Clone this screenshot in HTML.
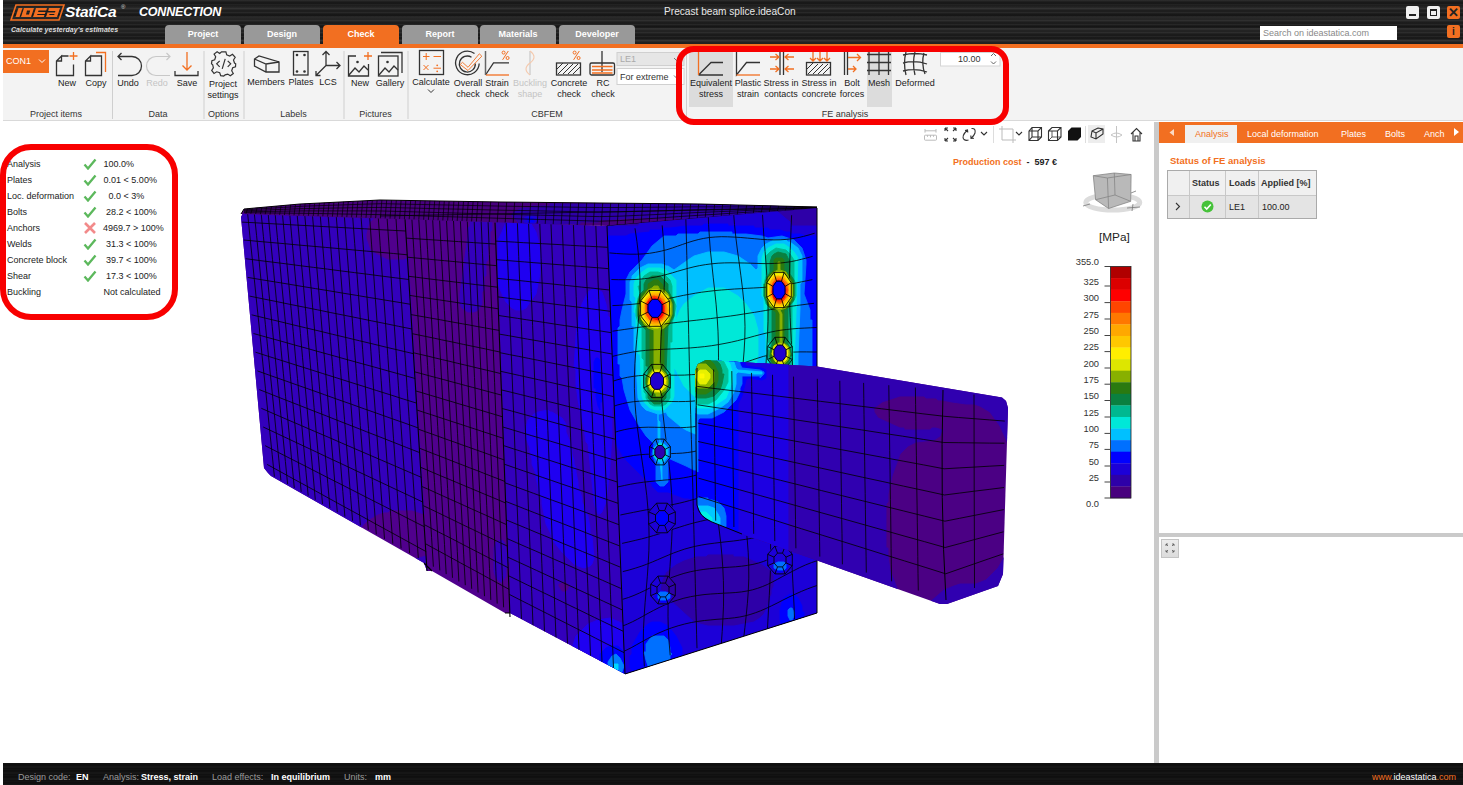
<!DOCTYPE html>
<html><head><meta charset="utf-8">
<style>
*{margin:0;padding:0;box-sizing:border-box}
html,body{width:1463px;height:785px;overflow:hidden;background:#fff;font-family:"Liberation Sans",sans-serif;position:relative}
.a{position:absolute;white-space:nowrap}
#title{left:3px;top:0;width:1460px;height:44px;background:#232323;
 background-image:repeating-linear-gradient(180deg,rgba(255,255,255,0.06) 0px,rgba(255,255,255,0) 1.5px,rgba(0,0,0,0.25) 3px,rgba(0,0,0,0) 4px),
 repeating-linear-gradient(180deg,rgba(0,0,0,0) 0px,rgba(0,0,0,0.3) 5px,rgba(255,255,255,0.05) 7px,rgba(0,0,0,0) 11px);}
#orange{left:3px;top:44px;width:1460px;height:4px;background:#f26f21}
#ribbon{left:3px;top:48px;width:1460px;height:73px;background:#f3f3f3;border-bottom:1px solid #d9d9d9}
.tab{top:25px;height:19px;width:76px;background:#999;border-radius:4px 4px 0 0;color:#fff;font-weight:bold;font-size:9px;text-align:center;line-height:19px}
.tab.on{background:#f26f21}
.rl{font-size:9px;color:#222;text-align:center;line-height:11px;margin-top:1px}
.gl{font-size:9px;color:#333;text-align:center;top:109px;line-height:11px}
.sep{top:51px;width:1px;height:68px;background:#d0d0d0}
.dis{color:#c4c4c4}
#status{left:3px;top:763px;width:1460px;height:22px;background:#0d0d0d;
 background-image:repeating-linear-gradient(180deg,rgba(255,255,255,0.035) 0px,rgba(0,0,0,0) 2px,rgba(255,255,255,0.05) 4px,rgba(0,0,0,0) 6px);}
.sg{color:#9a9a9a;font-size:9px;top:772px}
.sw{color:#fff;font-size:9px;font-weight:bold;top:772px}
.res{font-size:9px;color:#222;line-height:10px}
.leg{font-size:9.3px;color:#333;text-align:right;width:40px;line-height:10px}
</style></head><body>
<div class="a" id="title"></div>
<!-- logo -->
<svg class="a" style="left:10px;top:4px" width="56" height="17" viewBox="0 0 56 17">
 <path d="M6 1 L54 1 L49 16 L1 16 Z" fill="none" stroke="#f26f21" stroke-width="1.6"/>
 <path d="M8.5 4 L12.5 4 L9.5 13 L5.5 13 Z" fill="#f26f21"/>
 <path d="M14 4 L24 4 L21 13 L11 13 Z M17 6.5 L16 10.5 L19 10.5 L20.2 6.5 Z" fill="#f26f21" fill-rule="evenodd"/>
 <path d="M26 4 L37 4 L36.2 6.5 L28.5 6.5 L28 8 L35.5 8 L34.8 10 L27.5 10 L27 11 L34.5 11 L33.8 13 L23 13 Z" fill="#f26f21"/>
 <path d="M39 4 L50 4 L47 13 L36 13 L37.5 8.5 L45 8.5 L45.4 7 L38.2 7 Z M39.5 10 L39.2 11 L44.2 11 L44.5 10 Z" fill="#f26f21" fill-rule="evenodd"/>
</svg>
<div class="a" style="left:65px;top:3px;font-size:15.5px;font-weight:bold;font-style:italic;color:#fff;letter-spacing:-0.3px">StatiCa</div>
<div class="a" style="left:121px;top:4px;font-size:6px;color:#ddd">®</div>
<div class="a" style="left:139px;top:5px;font-size:12.5px;font-weight:bold;font-style:italic;color:#fff;letter-spacing:-0.2px">CONNECTION</div>
<div class="a" style="left:11px;top:26px;font-size:7px;font-weight:bold;font-style:italic;color:#ddd;letter-spacing:0.05px">Calculate yesterday's estimates</div>
<div class="a" style="left:664px;top:6px;font-size:10.15px;color:#e8e8e8">Precast beam splice.ideaCon</div>
<!-- tabs -->
<div class="a tab" style="left:165px">Project</div>
<div class="a tab" style="left:244px">Design</div>
<div class="a tab on" style="left:323px">Check</div>
<div class="a tab" style="left:402px">Report</div>
<div class="a tab" style="left:480px">Materials</div>
<div class="a tab" style="left:559px">Developer</div>
<!-- window buttons -->
<div class="a" style="left:1406px;top:6px;width:13px;height:13px;background:#f0f0f0;border-radius:2px"><div class="a" style="left:3px;top:8px;width:7px;height:2px;background:#222"></div></div>
<div class="a" style="left:1427px;top:6px;width:13px;height:13px;background:#f0f0f0;border-radius:2px"><div class="a" style="left:3px;top:3px;width:7px;height:7px;border:1.5px solid #222;border-top-width:2.5px"></div></div>
<div class="a" style="left:1447px;top:6px;width:13px;height:13px;background:#f26f21;border-radius:2px;color:#222;font-size:13px;font-weight:bold;line-height:13px;text-align:center">✕</div>
<div class="a" style="left:1260px;top:26px;width:137px;height:14px;background:#fff;font-size:9px;color:#888;line-height:14px;padding-left:3px">Search on ideastatica.com</div>
<div class="a" style="left:1447px;top:25px;width:13px;height:13px;background:#f26f21;border-radius:2px;color:#222;font-size:10px;font-weight:bold;line-height:13px;text-align:center">i</div>
<div class="a" id="orange"></div>
<div class="a" id="ribbon"></div>
<!-- ribbon content -->
<div class="a" style="left:3px;top:50px;width:46px;height:23px;background:#f26f21;color:#fff;font-size:9px;line-height:22px;padding-left:3px">CON1</div>
<svg class="a" style="left:38px;top:58px" width="8" height="6"><path d="M1 1.5 L4 4.5 L7 1.5" stroke="#fff" fill="none" stroke-width="1"/></svg>
<div class="a" style="left:689px;top:52px;width:44px;height:54.5px;background:#dcdcdc"></div>
<div class="a" style="left:867px;top:52px;width:25px;height:55px;background:#dcdcdc"></div>
<svg class="a" style="left:0;top:0" width="1463" height="125" viewBox="0 0 1463 125">
<g fill="none" stroke="#333" stroke-width="1.3" stroke-linejoin="miter">
 <!-- New doc -->
 <path d="M61 56 L68.5 56 M73.5 64.5 L73.5 75.5 L56.5 75.5 L56.5 61 L61.5 56 L61.5 61 L56.5 61"/>
 <!-- Copy doc -->
 <path d="M90.5 56 L101.5 56 L101.5 75.5 L85.5 75.5 L85.5 61 L90.5 56 L90.5 61 L85.5 61"/>
 <!-- undo -->
 <path d="M118 56.5 L132 56.5 A9.5 9.5 0 0 1 132 75.5 L118 75.5 M121.5 53 L118 56.5 L121.5 60"/>
 <!-- save tray -->
 <path d="M175 71 L175 75.5 L198 75.5 L198 71"/>
 <!-- plates -->
 <rect x="293.5" y="51.5" width="14.5" height="23.5"/>
 <!-- members -->
 <path d="M254.5 59 L259 56 L279 62 L279 72 L266 72 L254.5 66 Z M254.5 59 L266 64 L279 62 M266 64 L266 72"/>
 <!-- LCS -->
 <path d="M326 65.5 L326 51.5 M322.5 55 L326 51.5 L329.5 55 M326 65.5 L340 65.5 M336.5 62 L340 65.5 L336.5 69 M326 65.5 L316 75.5 M316 71 L316 75.5 L320.5 75.5"/>
 <!-- pictures new -->
 <path d="M356 56 L348.5 56 L348.5 76 L368.5 76 L368.5 64 M349 75 L355 68 L359 72 L364 66 L368 70"/>
 <!-- gallery -->
 <rect x="378.5" y="56" width="19.5" height="20"/>
 <path d="M381 52.5 L402 52.5 L402 73 M379 75 L385 68 L389 72 L394 66 L398 70"/>
 <!-- calculate -->
 <rect x="419.5" y="50.5" width="24" height="24"/>
 <!-- overall -->
 <path d="M474.5 53.5 A11.8 11.8 0 1 0 479.2 63.5"/><path d="M471.5 57.2 A8 8 0 1 0 475.3 63.5"/>
 <!-- strain -->
 <path d="M485.5 75 L493.5 62.8 L509 62.8"/><path d="M485.5 51 L485.5 75" stroke="#666" stroke-width="1.5"/>
 <!-- concrete -->
 <rect x="556.5" y="63" width="24" height="12"/>
 <!-- RC -->
 <rect x="590" y="63" width="24.5" height="12" rx="1.5"/>
 <path d="M602 51 L602 72"/>
 <!-- equivalent -->
 <path d="M698.5 75 L711 62.5 L723 62.5 M698.5 75 L723 75"/>
 <!-- plastic -->
 <path d="M736.5 51.5 L736.5 75 L746.5 62.5 L760 62.5"/>
 <!-- contacts -->
 <path d="M780 52 L780 75 M783.5 52 L783.5 75"/>
 <!-- stress in concrete -->
 <rect x="806.5" y="62.5" width="24" height="12.5"/>
 <!-- bolt -->
 <path d="M844.5 52 L844.5 75 M847.5 52 L847.5 75"/>
 <!-- mesh -->
 <path d="M869 52 L869 75 M879 52 L879 75 M888.5 52 L888.5 75 M867 54.5 L891 54.5 M867 62.5 L891 62.5 M867 70.5 L891 70.5"/>
 <!-- deformed -->
 <path d="M906 52 Q903 63 906 75 M915 52 Q912 63 915 75 M924 53 Q921 63 925 74 M903 55 Q915 52 927 55 M903 63 Q915 60 927 64 M903 71 Q915 68 927 72"/>
</g>
<g fill="none" stroke="#f26f21" stroke-width="1.3">
 <path d="M73.5 52 L73.5 60 M69.5 56 L77.5 56"/>
 <path d="M96 52.5 L105.5 52.5 L105.5 72"/>
 <path d="M187 52 L187 70 M182.5 65.5 L187 70 L191.5 65.5"/>
 <path d="M368 52 L368 60 M364 56 L372 56"/>
 <path d="M462.5 62.3 L468 67.3 L479.3 53.8 L481.8 56.2 L468 70.5 L460.2 64.5 Z" stroke-width="0.9"/>
 <path d="M486 75 L509 75"/>
 <path d="M698.5 52 L698.5 75"/>
 <path d="M736.5 75 L760 75"/>
 <path d="M770 57 L779 57 M775.5 54 L779 57 L775.5 60 M770 69 L779 69 M775.5 66 L779 69 L775.5 72 M794 57 L785 57 M788.5 54 L785 57 L788.5 60 M794 69 L785 69 M788.5 66 L785 69 L788.5 72"/>
 <path d="M813 52 L813 61 M810 58 L813 61 L816 58 M820 52 L820 61 M817 58 L820 61 L823 58 M827 52 L827 61 M824 58 L827 61 L830 58"/>
 <path d="M848 57.5 L860.5 57.5 M857 54 L860.5 57.5 L857 61 M848 69 L856 69 M853 66 L856 69 L853 72"/>
 <path d="M592 66.5 L612.5 66.5 M592 70 L612.5 70 M592 73 L612.5 73"/>
</g>
<g fill="none" stroke="#f26f21" stroke-width="1">
 <path d="M423 56.5 L429.5 56.5 M426.2 53 L426.2 60 M433.5 56.5 L441 56.5 M423.5 65 L428.5 70 M428.5 65 L423.5 70 M433.5 68.2 L441 68.2"/>
 <circle cx="503.6" cy="52.6" r="1.5"/><circle cx="507.6" cy="58" r="1.5"/><path d="M508.3 51 L502.6 59.8"/>
 <circle cx="574.6" cy="52.6" r="1.5"/><circle cx="578.6" cy="58" r="1.5"/><path d="M579.3 51 L573.6 59.8"/>
</g>
<g fill="#f26f21"><circle cx="437.2" cy="65.3" r="0.9"/><circle cx="437.2" cy="71.3" r="0.9"/></g>
<g stroke="#c8c8c8" fill="none" stroke-width="1.2">
 <path d="M170 56.5 L156 56.5 A9.5 9.5 0 0 0 156 75.5 L170 75.5 M166.5 53 L170 56.5 L166.5 60"/>
 <path d="M530 51 L530 75"/>
</g>
<path d="M530 51 Q538 57 530 63 Q522 69 530 75" stroke="#f5c9ad" fill="none" stroke-width="1.1"/>
<!-- hatching -->
<g stroke="#333" stroke-width="1">
 <path d="M558 74 L568 64 M563 74 L573 64 M568 74 L578 64 M573 74 L580 67 M557 69 L563 63"/>
 <path d="M808 74 L818 64 M813 74 L823 64 M818 74 L828 64 M823 74 L830 67 M807 69 L813 63"/>
</g>
<g fill="#333"><circle cx="297" cy="55" r="1.3"/><circle cx="304.5" cy="55" r="1.3"/><circle cx="297" cy="71.5" r="1.3"/><circle cx="304.5" cy="71.5" r="1.3"/>
<circle cx="357.5" cy="62" r="1.3"/><circle cx="387.5" cy="62" r="1.3"/></g>
<!-- gear -->
<g transform="translate(223.7 63.8)" fill="none" stroke="#333" stroke-width="1.2">
 <path d="M-2.2 -12 L2.2 -12 L3 -9 L6 -7.8 L8.8 -9.5 L11.5 -6.5 L9.8 -3.8 L10.8 -0.8 L12 0 L11.8 3 L9 4 L8 7 L9.6 9.7 L6.6 12 L4 10.3 L1.5 11 L0 12.2 L-3 11.8 L-4 9 L-7 8 L-9.7 9.6 L-12 6.6 L-10.3 4 L-11 1 L-12.2 0 L-11.8 -3 L-9 -4 L-8 -7 L-9.6 -9.7 L-6.6 -12 L-4 -10.3 Z"/>
 <path d="M-4 -3 L-7 0 L-4 3 M4 -3 L7 0 L4 3 M1.5 -5 L-1.5 5"/>
</g>
<!-- LE1 / For extreme -->
<rect x="617" y="52.5" width="67" height="13" fill="#e6e6e6" stroke="#d0d0d0"/>
<rect x="617" y="68.5" width="67" height="16" fill="#fff" stroke="#d0d0d0"/>
<path d="M674 58 L676.5 60.5 L679 58 M674 75.5 L676.5 78 L679 75.5" stroke="#666" fill="none" stroke-width="0.9"/>
<rect x="940.5" y="52.5" width="59.5" height="13.5" fill="#fff" stroke="#d5d5d5"/>
<path d="M991 56 L993.5 53.5 L996 56 M991 61.5 L993.5 64 L996 61.5" stroke="#555" fill="none" stroke-width="0.9"/>
<!-- separators -->
<g fill="#cfcfcf"><rect x="112" y="51" width="1" height="68"/><rect x="203.5" y="51" width="1" height="68"/><rect x="243.5" y="51" width="1" height="68"/><rect x="343.5" y="51" width="1" height="68"/><rect x="407.5" y="51" width="1" height="68"/><rect x="686" y="51" width="1" height="68"/></g>
</svg>
<div class="a" style="left:620px;top:53px;font-size:9px;color:#aaa;line-height:12px">LE1</div>
<div class="a" style="left:620px;top:71px;font-size:9px;color:#333;line-height:12px">For extreme</div>
<div class="a" style="left:958px;top:53px;font-size:9px;color:#333;line-height:12px">10.00</div>
<!-- labels -->
<div class="a rl" style="left:52px;top:77px;width:30px">New</div>
<div class="a rl" style="left:81px;top:77px;width:30px">Copy</div>
<div class="a rl" style="left:113px;top:77px;width:30px">Undo</div>
<div class="a rl dis" style="left:142px;top:77px;width:30px">Redo</div>
<div class="a rl" style="left:172px;top:77px;width:30px">Save</div>
<div class="a rl" style="left:203px;top:78px;width:40px">Project<br>settings</div>
<div class="a rl" style="left:246px;top:76px;width:40px">Members</div>
<div class="a rl" style="left:286px;top:76px;width:30px">Plates</div>
<div class="a rl" style="left:313px;top:76px;width:30px">LCS</div>
<div class="a rl" style="left:345px;top:77px;width:30px">New</div>
<div class="a rl" style="left:372px;top:77px;width:36px">Gallery</div>
<div class="a rl" style="left:410px;top:76px;width:42px">Calculate</div>
<div class="a rl" style="left:450px;top:77px;width:36px">Overall<br>check</div>
<div class="a rl" style="left:482px;top:77px;width:30px">Strain<br>check</div>
<div class="a rl dis" style="left:510px;top:77px;width:40px">Buckling<br>shape</div>
<div class="a rl" style="left:548px;top:77px;width:42px">Concrete<br>check</div>
<div class="a rl" style="left:588px;top:77px;width:30px">RC<br>check</div>
<div class="a rl" style="left:689px;top:77px;width:44px">Equivalent<br>stress</div>
<div class="a rl" style="left:733px;top:77px;width:30px">Plastic<br>strain</div>
<div class="a rl" style="left:761px;top:77px;width:40px">Stress in<br>contacts</div>
<div class="a rl" style="left:798px;top:77px;width:42px">Stress in<br>concrete</div>
<div class="a rl" style="left:837px;top:77px;width:30px">Bolt<br>forces</div>
<div class="a rl" style="left:865px;top:77px;width:28px">Mesh</div>
<div class="a rl" style="left:893px;top:77px;width:44px">Deformed</div>
<svg class="a" style="left:427px;top:88px" width="8" height="6"><path d="M1 1.5 L4 4.5 L7 1.5" stroke="#333" fill="none" stroke-width="1"/></svg>
<div class="a gl" style="left:6px;width:100px">Project items</div>
<div class="a gl" style="left:113px;width:90px">Data</div>
<div class="a gl" style="left:204px;width:39px">Options</div>
<div class="a gl" style="left:244px;width:99px">Labels</div>
<div class="a gl" style="left:344px;width:63px">Pictures</div>
<div class="a gl" style="left:408px;width:278px">CBFEM</div>
<div class="a gl" style="left:687px;width:316px">FE analysis</div>
<svg class="a" style="left:0;top:0" width="1463" height="785" viewBox="0 0 1463 785">
<clipPath id="cp1"><path d="M244.00 211.00 L607.00 226.00 L625.00 674.00 L510.00 613.00 L505.00 613.00 L432.00 571.00 L427.00 571.00 L424.00 563.00 L271.00 476.00 L268.00 473.00 L264.00 468.00 L241.00 217.00Z"/></clipPath>
<path d="M244.00 211.00 L607.00 226.00 L625.00 674.00 L510.00 613.00 L505.00 613.00 L432.00 571.00 L427.00 571.00 L424.00 563.00 L271.00 476.00 L268.00 473.00 L264.00 468.00 L241.00 217.00Z" fill="#50008d"/>
<g clip-path="url(#cp1)">
<path d="M562 582 566 582 570 586 568 590 566 592 562 592 558 586 558 584ZM484 214 478 214 474 216 470 222 470 226 468 228 468 234 468 236 466 250 466 250 464 264 464 266 462 280 462 280 460 294 460 296 460 304 462 308 468 312 474 312 478 310 482 304 482 300 482 298 482 292 484 290 484 276 486 276 486 262 488 260 488 246 490 246 490 232 492 230 492 222 490 218ZM496 206 508 552 508 554 506 552 506 548 504 542 502 540 500 540 496 542 494 548 494 552 494 554 494 568 494 568 494 572 496 578 500 582 502 582 506 576 506 568 508 568 508 562 508 562 510 562 510 588 510 588 510 614 512 614 512 640 512 640 514 680 630 680 630 206ZM236 206 236 680 434 680 434 676 434 662 432 660 432 646 432 644 432 630 430 630 430 614 430 614 430 598 428 598 428 582 428 582 426 556 412 560 390 560 388 560 384 560 374 556 368 552 362 546 358 540 358 532 362 526 368 520 378 514 384 512 388 512 390 510 412 510 424 514 408 258 404 260 388 260 376 254 370 250 368 244 366 238 366 234 368 226 370 222 376 216 388 210 404 210 404 212 404 206Z" fill="#3300bc" stroke="#3300bc" stroke-width="0.9" fill-rule="evenodd"/>
<path d="M584 628 576 636 572 648 572 664 576 676 580 680 630 680 630 630 624 624 610 618 598 620 588 624ZM538 412 534 414 528 420 526 428 526 434 526 434 526 438 530 448 530 452 532 460 532 464 536 474 536 478 538 486 538 490 542 500 542 504 542 504 546 524 550 532 554 542 562 552 574 564 578 566 584 568 590 566 592 564 594 558 592 536 590 534 590 530 590 528 588 516 586 512 584 506 582 502 582 498 578 486 578 482 576 472 576 468 574 464 574 460 572 454 572 450 570 446 570 442 566 432 566 424 562 418 552 412 550 412 548 410ZM594 288 588 292 582 304 580 310 578 322 578 322 576 336 576 338 574 368 576 370 576 384 576 384 578 400 578 400 580 410 584 428 586 442 588 444 594 500 594 502 596 510 598 514 600 514 602 512 606 502 608 486 608 486 610 466 610 466 612 434 612 434 612 408 614 406 614 358 612 358 612 332 610 330 610 318 608 316 606 304 602 292 598 290ZM516 216 512 218 506 222 502 232 498 240 498 244 498 246 498 274 498 276 498 284 502 294 506 302 512 308 516 310 522 310 526 308 530 302 536 294 538 284 540 274 540 274 540 252 540 250 538 240 536 232 530 222 526 218 522 216Z" fill="#1f00f1" stroke="#1f00f1" stroke-width="0.9" fill-rule="evenodd"/>
<path d="M606 648 600 654 600 664 606 678 608 680 624 680 628 670 628 662 624 652 618 646 616 646 610 646ZM596 358 594 362 594 388 596 388 596 396 596 396 598 406 600 410 600 408 600 402 602 402 602 372 600 372 600 360 598 358Z" fill="#0000ff" stroke="#0000ff" stroke-width="0.9" fill-rule="evenodd"/>
<path d="M616 654 612 656 608 662 608 670 612 678 618 678 620 676 622 672 624 666 620 658Z" fill="#007dff" stroke="#007dff" stroke-width="0.9" fill-rule="evenodd"/>
<path d="M614 664 614 670 616 672 618 670 618 666 618 664Z" fill="#00d7ff" stroke="#00d7ff" stroke-width="0.9" fill-rule="evenodd"/>
</g>
<path d="M247.6 213.2 L249.8 235.2 L252.1 257.1 L254.3 279.1 L256.5 301.0 L258.8 323.0 L261.0 344.9 L263.2 366.9 L265.5 388.8 L267.7 410.8 L269.9 432.7 L272.2 454.7 L274.4 476.6M254.3 213.5 L256.6 235.7 L258.8 258.0 L261.0 280.2 L263.2 302.4 L265.4 324.7 L267.6 346.9 L269.8 369.1 L272.1 391.4 L274.3 413.6 L276.5 435.8 L278.7 458.1 L280.9 480.3M261.2 213.7 L263.4 236.3 L265.6 258.8 L267.8 281.3 L270.0 303.9 L272.2 326.4 L274.4 348.9 L276.6 371.4 L278.8 394.0 L281.0 416.5 L283.2 439.0 L285.4 461.5 L287.6 484.1M268.2 214.0 L270.3 236.8 L272.5 259.6 L274.7 282.5 L276.9 305.3 L279.1 328.1 L281.2 350.9 L283.4 373.8 L285.6 396.6 L287.8 419.4 L290.0 442.2 L292.1 465.1 L294.3 487.9M275.2 214.3 L277.4 237.4 L279.6 260.5 L281.7 283.6 L283.9 306.8 L286.1 329.9 L288.2 353.0 L290.4 376.2 L292.5 399.3 L294.7 422.4 L296.9 445.5 L299.0 468.7 L301.2 491.8M282.5 214.5 L284.6 238.0 L286.7 261.4 L288.9 284.8 L291.0 308.3 L293.2 331.7 L295.3 355.1 L297.5 378.6 L299.6 402.0 L301.8 425.4 L303.9 448.9 L306.0 472.3 L308.2 495.7M289.8 214.8 L291.9 238.5 L294.0 262.3 L296.2 286.0 L298.3 309.8 L300.4 333.5 L302.5 357.3 L304.7 381.0 L306.8 404.8 L308.9 428.5 L311.0 452.3 L313.2 476.0 L315.3 499.8M297.2 215.1 L299.3 239.1 L301.4 263.2 L303.6 287.3 L305.7 311.3 L307.8 335.4 L309.9 359.5 L312.0 383.5 L314.1 407.6 L316.2 431.7 L318.3 455.7 L320.4 479.8 L322.5 503.9M304.8 215.3 L306.9 239.7 L309.0 264.1 L311.1 288.5 L313.1 312.9 L315.2 337.3 L317.3 361.7 L319.4 386.1 L321.5 410.5 L323.6 434.8 L325.7 459.2 L327.8 483.6 L329.9 508.0M312.5 215.6 L314.6 240.3 L316.6 265.1 L318.7 289.8 L320.8 314.5 L322.8 339.2 L324.9 363.9 L327.0 388.6 L329.0 413.4 L331.1 438.1 L333.2 462.8 L335.2 487.5 L337.3 512.2M320.3 215.9 L322.3 241.0 L324.4 266.0 L326.4 291.1 L328.5 316.1 L330.5 341.2 L332.6 366.2 L334.6 391.3 L336.7 416.3 L338.7 441.4 L340.8 466.4 L342.8 491.5 L344.9 516.5M328.2 216.2 L330.3 241.6 L332.3 267.0 L334.3 292.4 L336.3 317.8 L338.4 343.1 L340.4 368.5 L342.4 393.9 L344.5 419.3 L346.5 444.7 L348.5 470.1 L350.5 495.5 L352.6 520.9M336.3 216.5 L338.3 242.2 L340.3 268.0 L342.3 293.7 L344.3 319.4 L346.3 345.2 L348.3 370.9 L350.3 396.6 L352.3 422.4 L354.3 448.1 L356.4 473.8 L358.4 499.6 L360.4 525.3M344.4 216.8 L346.4 242.9 L348.4 268.9 L350.4 295.0 L352.4 321.1 L354.4 347.2 L356.4 373.3 L358.4 399.4 L360.3 425.4 L362.3 451.5 L364.3 477.6 L366.3 503.7 L368.3 529.8M352.7 217.1 L354.7 243.5 L356.7 270.0 L358.6 296.4 L360.6 322.8 L362.6 349.3 L364.5 375.7 L366.5 402.1 L368.5 428.6 L370.4 455.0 L372.4 481.4 L374.4 507.9 L376.3 534.3M361.1 217.4 L363.1 244.2 L365.0 271.0 L367.0 297.8 L368.9 324.6 L370.9 351.4 L372.8 378.2 L374.8 405.0 L376.7 431.8 L378.6 458.5 L380.6 485.3 L382.5 512.1 L384.5 538.9M369.7 217.7 L371.6 244.9 L373.5 272.0 L375.4 299.2 L377.4 326.3 L379.3 353.5 L381.2 380.7 L383.1 407.8 L385.1 435.0 L387.0 462.1 L388.9 489.3 L390.8 516.5 L392.8 543.6M378.3 218.0 L380.2 245.6 L382.1 273.1 L384.0 300.6 L385.9 328.1 L387.8 355.7 L389.7 383.2 L391.6 410.7 L393.5 438.2 L395.4 465.8 L397.3 493.3 L399.2 520.8 L401.1 548.4M387.1 218.3 L389.0 246.2 L390.9 274.2 L392.7 302.1 L394.6 330.0 L396.5 357.9 L398.4 385.8 L400.2 413.7 L402.1 441.6 L404.0 469.5 L405.9 497.4 L407.8 525.3 L409.6 553.2M396.0 218.7 L397.8 247.0 L399.7 275.2 L401.6 303.5 L403.4 331.8 L405.3 360.1 L407.1 388.4 L409.0 416.6 L410.8 444.9 L412.7 473.2 L414.6 501.5 L416.4 529.8 L418.3 558.1M241.9 222.1 L255.6 222.8 L269.2 223.6 L282.9 224.3 L296.6 225.1 L310.2 225.8 L323.9 226.6 L337.5 227.3 L351.2 228.1 L364.8 228.8 L378.5 229.6 L392.1 230.3 L405.8 231.0M243.8 240.0 L257.4 241.3 L271.1 242.5 L284.7 243.7 L298.3 245.0 L311.9 246.2 L325.5 247.4 L339.2 248.6 L352.8 249.9 L366.4 251.1 L380.0 252.3 L393.7 253.5 L407.3 254.8M245.7 258.7 L259.3 260.5 L272.9 262.2 L286.5 263.9 L300.1 265.7 L313.7 267.4 L327.3 269.1 L340.9 270.9 L354.5 272.6 L368.1 274.3 L381.7 276.1 L395.3 277.8 L408.9 279.5M247.7 277.4 L261.3 279.7 L274.8 281.9 L288.4 284.1 L301.9 286.4 L315.5 288.6 L329.1 290.8 L342.6 293.1 L356.2 295.3 L369.8 297.6 L383.3 299.8 L396.9 302.0 L410.5 304.3M249.6 296.1 L263.2 298.9 L276.7 301.6 L290.2 304.4 L303.8 307.1 L317.3 309.8 L330.8 312.6 L344.4 315.3 L357.9 318.0 L371.4 320.8 L385.0 323.5 L398.5 326.3 L412.0 329.0M251.6 314.8 L265.1 318.1 L278.6 321.3 L292.1 324.6 L305.6 327.8 L319.1 331.0 L332.6 334.3 L346.1 337.5 L359.6 340.8 L373.1 344.0 L386.6 347.3 L400.1 350.5 L413.6 353.7M253.5 333.5 L267.0 337.3 L280.5 341.0 L293.9 344.8 L307.4 348.5 L320.9 352.3 L334.4 356.0 L347.8 359.8 L361.3 363.5 L374.8 367.2 L388.3 371.0 L401.7 374.7 L415.2 378.5M255.5 352.2 L268.9 356.5 L282.3 360.7 L295.8 365.0 L309.2 369.2 L322.7 373.5 L336.1 377.7 L349.6 382.0 L363.0 386.2 L376.5 390.5 L389.9 394.7 L403.3 399.0 L416.8 403.2M257.4 370.9 L270.8 375.7 L284.2 380.4 L297.6 385.2 L311.1 389.9 L324.5 394.7 L337.9 399.5 L351.3 404.2 L364.7 409.0 L378.1 413.7 L391.5 418.5 L405.0 423.2 L418.4 428.0M259.3 389.6 L272.7 394.9 L286.1 400.2 L299.5 405.4 L312.9 410.7 L326.3 415.9 L339.6 421.2 L353.0 426.4 L366.4 431.7 L379.8 436.9 L393.2 442.2 L406.6 447.5 L419.9 452.7M261.3 408.3 L274.6 414.1 L288.0 419.9 L301.3 425.6 L314.7 431.4 L328.1 437.1 L341.4 442.9 L354.8 448.7 L368.1 454.4 L381.5 460.2 L394.8 465.9 L408.2 471.7 L421.5 477.4M263.2 427.0 L276.6 433.3 L289.9 439.6 L303.2 445.8 L316.5 452.1 L329.8 458.4 L343.2 464.6 L356.5 470.9 L369.8 477.1 L383.1 483.4 L396.5 489.7 L409.8 495.9 L423.1 502.2M265.2 445.7 L278.5 452.5 L291.8 459.3 L305.1 466.0 L318.3 472.8 L331.6 479.6 L344.9 486.3 L358.2 493.1 L371.5 499.9 L384.8 506.6 L398.1 513.4 L411.4 520.2 L424.7 526.9M267.1 464.4 L280.4 471.7 L293.6 479.0 L306.9 486.2 L320.2 493.5 L333.4 500.8 L346.7 508.1 L360.0 515.3 L373.2 522.6 L386.5 529.9 L399.7 537.1 L413.0 544.4 L426.3 551.7M411.9 219.3 L413.7 248.2 L415.5 277.2 L417.3 306.1 L419.1 335.1 L420.9 364.0 L422.7 393.0 L424.4 421.9 L426.2 450.9 L428.0 479.8 L429.8 508.8 L431.6 537.7 L433.4 566.7M418.8 219.5 L420.6 248.8 L422.3 278.0 L424.1 307.2 L425.8 336.5 L427.6 365.7 L429.3 395.0 L431.1 424.2 L432.8 453.4 L434.5 482.7 L436.3 511.9 L438.0 541.1 L439.8 570.4M425.8 219.8 L427.5 249.3 L429.2 278.9 L430.9 308.4 L432.6 337.9 L434.3 367.4 L436.0 396.9 L437.7 426.5 L439.4 456.0 L441.1 485.5 L442.8 515.0 L444.5 544.6 L446.2 574.1M432.7 220.1 L434.3 249.9 L436.0 279.7 L437.7 309.5 L439.3 339.3 L441.0 369.1 L442.6 398.9 L444.3 428.7 L445.9 458.5 L447.6 488.3 L449.2 518.2 L450.9 548.0 L452.5 577.8M439.6 220.3 L441.2 250.4 L442.8 280.5 L444.4 310.6 L446.1 340.7 L447.7 370.8 L449.3 400.9 L450.9 431.0 L452.5 461.1 L454.1 491.2 L455.7 521.3 L457.3 551.4 L458.9 581.5M446.5 220.6 L448.1 251.0 L449.7 281.4 L451.2 311.8 L452.8 342.1 L454.4 372.5 L455.9 402.9 L457.5 433.3 L459.1 463.6 L460.6 494.0 L462.2 524.4 L463.7 554.8 L465.3 585.2M453.5 220.9 L455.0 251.5 L456.5 282.2 L458.0 312.9 L459.5 343.5 L461.1 374.2 L462.6 404.9 L464.1 435.5 L465.6 466.2 L467.1 496.9 L468.7 527.5 L470.2 558.2 L471.7 588.8M460.4 221.2 L461.9 252.1 L463.3 283.1 L464.8 314.0 L466.3 344.9 L467.8 375.9 L469.2 406.8 L470.7 437.8 L472.2 468.7 L473.7 499.7 L475.1 530.6 L476.6 561.6 L478.1 592.5M467.3 221.4 L468.7 252.7 L470.2 283.9 L471.6 315.1 L473.0 346.4 L474.5 377.6 L475.9 408.8 L477.3 440.1 L478.7 471.3 L480.2 502.5 L481.6 533.8 L483.0 565.0 L484.5 596.2M474.2 221.7 L475.6 253.2 L477.0 284.7 L478.4 316.2 L479.8 347.8 L481.2 379.3 L482.5 410.8 L483.9 442.3 L485.3 473.8 L486.7 505.4 L488.1 536.9 L489.5 568.4 L490.8 599.9M481.2 222.0 L482.5 253.8 L483.8 285.6 L485.2 317.4 L486.5 349.2 L487.9 381.0 L489.2 412.8 L490.5 444.6 L491.9 476.4 L493.2 508.2 L494.6 540.0 L495.9 571.8 L497.2 603.6M488.1 222.2 L489.4 254.3 L490.7 286.4 L492.0 318.5 L493.3 350.6 L494.6 382.7 L495.8 414.8 L497.1 446.9 L498.4 478.9 L499.7 511.0 L501.0 543.1 L502.3 575.2 L503.6 607.3M406.2 238.1 L413.7 238.6 L421.2 239.1 L428.6 239.6 L436.1 240.1 L443.6 240.6 L451.0 241.1 L458.5 241.6 L466.0 242.1 L473.4 242.6 L480.9 243.1 L488.4 243.6 L495.8 244.1M407.4 257.2 L414.9 257.9 L422.3 258.6 L429.8 259.3 L437.2 260.0 L444.6 260.7 L452.1 261.4 L459.5 262.1 L466.9 262.9 L474.4 263.6 L481.8 264.3 L489.2 265.0 L496.7 265.7M408.7 276.3 L416.1 277.2 L423.5 278.2 L430.9 279.1 L438.3 280.0 L445.7 280.9 L453.1 281.8 L460.5 282.7 L467.9 283.6 L475.3 284.5 L482.7 285.4 L490.1 286.3 L497.5 287.2M409.9 295.4 L417.3 296.6 L424.6 297.7 L432.0 298.8 L439.4 299.9 L446.7 301.0 L454.1 302.1 L461.5 303.3 L468.9 304.4 L476.2 305.5 L483.6 306.6 L491.0 307.7 L498.3 308.8M411.1 314.6 L418.4 315.9 L425.8 317.2 L433.1 318.5 L440.5 319.8 L447.8 321.2 L455.1 322.5 L462.5 323.8 L469.8 325.1 L477.2 326.5 L484.5 327.8 L491.8 329.1 L499.2 330.4M412.3 333.7 L419.6 335.2 L426.9 336.7 L434.2 338.2 L441.6 339.8 L448.9 341.3 L456.2 342.8 L463.5 344.4 L470.8 345.9 L478.1 347.4 L485.4 348.9 L492.7 350.5 L500.0 352.0M413.6 352.8 L420.8 354.5 L428.1 356.2 L435.4 358.0 L442.6 359.7 L449.9 361.4 L457.2 363.2 L464.5 364.9 L471.7 366.6 L479.0 368.4 L486.3 370.1 L493.6 371.8 L500.8 373.6M414.8 371.9 L422.0 373.8 L429.3 375.8 L436.5 377.7 L443.7 379.6 L451.0 381.6 L458.2 383.5 L465.5 385.5 L472.7 387.4 L479.9 389.3 L487.2 391.3 L494.4 393.2 L501.7 395.2M416.0 391.0 L423.2 393.1 L430.4 395.3 L437.6 397.4 L444.8 399.6 L452.0 401.7 L459.2 403.9 L466.5 406.0 L473.7 408.2 L480.9 410.3 L488.1 412.5 L495.3 414.6 L502.5 416.8M417.2 410.1 L424.4 412.5 L431.6 414.8 L438.8 417.2 L445.9 419.5 L453.1 421.9 L460.3 424.2 L467.5 426.6 L474.6 428.9 L481.8 431.3 L489.0 433.6 L496.2 436.0 L503.3 438.3M418.4 429.2 L425.6 431.8 L432.7 434.3 L439.9 436.9 L447.0 439.5 L454.2 442.0 L461.3 444.6 L468.4 447.1 L475.6 449.7 L482.7 452.2 L489.9 454.8 L497.0 457.4 L504.2 459.9M419.7 448.3 L426.8 451.1 L433.9 453.9 L441.0 456.6 L448.1 459.4 L455.2 462.2 L462.3 464.9 L469.4 467.7 L476.6 470.4 L483.7 473.2 L490.8 476.0 L497.9 478.7 L505.0 481.5M420.9 467.4 L428.0 470.4 L435.0 473.4 L442.1 476.4 L449.2 479.3 L456.3 482.3 L463.4 485.3 L470.4 488.2 L477.5 491.2 L484.6 494.2 L491.7 497.1 L498.8 500.1 L505.8 503.1M422.1 486.6 L429.2 489.7 L436.2 492.9 L443.2 496.1 L450.3 499.3 L457.3 502.4 L464.4 505.6 L471.4 508.8 L478.5 512.0 L485.5 515.1 L492.6 518.3 L499.6 521.5 L506.7 524.7M423.3 505.7 L430.3 509.0 L437.4 512.4 L444.4 515.8 L451.4 519.2 L458.4 522.6 L465.4 526.0 L472.4 529.3 L479.4 532.7 L486.5 536.1 L493.5 539.5 L500.5 542.9 L507.5 546.2M424.6 524.8 L431.5 528.4 L438.5 532.0 L445.5 535.5 L452.5 539.1 L459.5 542.7 L466.4 546.3 L473.4 549.9 L480.4 553.5 L487.4 557.1 L494.4 560.7 L501.4 564.2 L508.3 567.8M425.8 543.9 L432.7 547.7 L439.7 551.5 L446.6 555.3 L453.6 559.1 L460.5 562.9 L467.5 566.7 L474.4 570.4 L481.4 574.2 L488.3 578.0 L495.3 581.8 L502.2 585.6 L509.2 589.4M506.2 222.8 L507.5 255.9 L508.8 288.9 L510.0 321.9 L511.3 354.9 L512.6 388.0 L513.9 421.0 L515.1 454.0 L516.4 487.0 L517.7 520.0 L519.0 553.1 L520.2 586.1 L521.5 619.1M517.4 223.2 L518.7 256.7 L520.0 290.2 L521.3 323.7 L522.6 357.2 L523.9 390.7 L525.2 424.2 L526.5 457.7 L527.8 491.2 L529.1 524.7 L530.4 558.2 L531.7 591.7 L533.0 625.2M528.6 223.6 L529.9 257.5 L531.2 291.5 L532.6 325.5 L533.9 359.5 L535.2 393.4 L536.5 427.4 L537.9 461.4 L539.2 495.4 L540.5 529.4 L541.8 563.3 L543.2 597.3 L544.5 631.3M539.8 223.9 L541.1 258.4 L542.5 292.8 L543.9 327.3 L545.2 361.7 L546.5 396.2 L547.9 430.6 L549.2 465.1 L550.6 499.6 L552.0 534.0 L553.3 568.5 L554.6 602.9 L556.0 637.4M551.0 224.2 L552.4 259.2 L553.8 294.1 L555.1 329.1 L556.5 364.0 L557.9 398.9 L559.2 433.9 L560.6 468.8 L562.0 503.7 L563.4 538.7 L564.8 573.6 L566.1 608.6 L567.5 643.5M562.2 224.6 L563.6 260.0 L565.0 295.4 L566.4 330.8 L567.8 366.3 L569.2 401.7 L570.6 437.1 L572.0 472.5 L573.4 507.9 L574.8 543.3 L576.2 578.8 L577.6 614.2 L579.0 649.6M573.4 224.9 L574.8 260.8 L576.2 296.7 L577.7 332.6 L579.1 368.5 L580.5 404.4 L582.0 440.3 L583.4 476.2 L584.8 512.1 L586.2 548.0 L587.7 583.9 L589.1 619.8 L590.5 655.7M584.6 225.3 L586.0 261.7 L587.5 298.1 L589.0 334.4 L590.4 370.8 L591.9 407.2 L593.3 443.5 L594.8 479.9 L596.2 516.3 L597.7 552.7 L599.1 589.1 L600.6 625.4 L602.0 661.8M595.8 225.7 L597.3 262.5 L598.8 299.4 L600.2 336.2 L601.7 373.1 L603.2 409.9 L604.7 446.8 L606.1 483.6 L607.6 520.5 L609.1 557.3 L610.5 594.2 L612.0 631.0 L613.5 667.9M495.7 241.1 L505.1 241.6 L514.4 242.1 L523.7 242.7 L533.1 243.2 L542.4 243.7 L551.8 244.2 L561.1 244.7 L570.5 245.3 L579.8 245.8 L589.2 246.3 L598.5 246.8 L607.9 247.3M496.4 259.7 L505.8 260.4 L515.1 261.2 L524.5 261.9 L533.9 262.7 L543.2 263.4 L552.6 264.2 L561.9 264.9 L571.3 265.7 L580.6 266.4 L590.0 267.2 L599.4 267.9 L608.7 268.7M497.1 278.3 L506.5 279.3 L515.9 280.2 L525.2 281.2 L534.6 282.2 L544.0 283.2 L553.4 284.1 L562.7 285.1 L572.1 286.1 L581.5 287.1 L590.8 288.0 L600.2 289.0 L609.6 290.0M497.9 296.9 L507.2 298.1 L516.6 299.3 L526.0 300.5 L535.4 301.7 L544.8 302.9 L554.1 304.1 L563.5 305.3 L572.9 306.5 L582.3 307.7 L591.7 308.9 L601.0 310.1 L610.4 311.3M498.6 315.5 L508.0 316.9 L517.4 318.3 L526.8 319.8 L536.1 321.2 L545.5 322.6 L554.9 324.1 L564.3 325.5 L573.7 326.9 L583.1 328.4 L592.5 329.8 L601.9 331.2 L611.3 332.7M499.3 334.1 L508.7 335.7 L518.1 337.4 L527.5 339.1 L536.9 340.7 L546.3 342.4 L555.7 344.0 L565.1 345.7 L574.5 347.4 L583.9 349.0 L593.3 350.7 L602.7 352.3 L612.1 354.0M500.0 352.7 L509.4 354.6 L518.8 356.4 L528.2 358.3 L537.7 360.2 L547.1 362.1 L556.5 364.0 L565.9 365.9 L575.3 367.8 L584.8 369.7 L594.2 371.6 L603.6 373.4 L613.0 375.3M500.7 371.3 L510.1 373.4 L519.6 375.5 L529.0 377.6 L538.4 379.7 L547.9 381.8 L557.3 384.0 L566.7 386.1 L576.1 388.2 L585.6 390.3 L595.0 392.4 L604.4 394.5 L613.9 396.7M501.4 389.9 L510.9 392.2 L520.3 394.5 L529.8 396.9 L539.2 399.2 L548.6 401.6 L558.1 403.9 L567.5 406.3 L577.0 408.6 L586.4 411.0 L595.8 413.3 L605.3 415.7 L614.7 418.0M502.1 408.5 L511.6 411.0 L521.0 413.6 L530.5 416.2 L540.0 418.7 L549.4 421.3 L558.9 423.9 L568.3 426.5 L577.8 429.0 L587.2 431.6 L596.7 434.2 L606.1 436.8 L615.6 439.3M502.9 427.0 L512.3 429.8 L521.8 432.7 L531.2 435.5 L540.7 438.3 L550.2 441.1 L559.6 443.9 L569.1 446.7 L578.6 449.5 L588.0 452.3 L597.5 455.1 L607.0 457.9 L616.4 460.7M503.6 445.6 L513.0 448.7 L522.5 451.7 L532.0 454.7 L541.5 457.8 L551.0 460.8 L560.4 463.8 L569.9 466.9 L579.4 469.9 L588.9 472.9 L598.3 475.9 L607.8 479.0 L617.3 482.0M504.3 464.2 L513.8 467.5 L523.3 470.8 L532.8 474.0 L542.2 477.3 L551.7 480.5 L561.2 483.8 L570.7 487.0 L580.2 490.3 L589.7 493.6 L599.2 496.8 L608.7 500.1 L618.1 503.3M505.0 482.8 L514.5 486.3 L524.0 489.8 L533.5 493.3 L543.0 496.8 L552.5 500.3 L562.0 503.7 L571.5 507.2 L581.0 510.7 L590.5 514.2 L600.0 517.7 L609.5 521.2 L619.0 524.7M505.7 501.4 L515.2 505.1 L524.7 508.9 L534.2 512.6 L543.8 516.3 L553.3 520.0 L562.8 523.7 L572.3 527.4 L581.8 531.1 L591.3 534.9 L600.8 538.6 L610.3 542.3 L619.9 546.0M506.4 520.0 L516.0 524.0 L525.5 527.9 L535.0 531.9 L544.5 535.8 L554.0 539.7 L563.6 543.7 L573.1 547.6 L582.6 551.6 L592.1 555.5 L601.7 559.4 L611.2 563.4 L620.7 567.3M507.1 538.6 L516.7 542.8 L526.2 547.0 L535.8 551.1 L545.3 555.3 L554.8 559.5 L564.4 563.6 L573.9 567.8 L583.4 572.0 L593.0 576.2 L602.5 580.3 L612.0 584.5 L621.6 588.7M507.9 557.2 L517.4 561.6 L527.0 566.0 L536.5 570.4 L546.0 574.8 L555.6 579.2 L565.1 583.6 L574.7 588.0 L584.2 592.4 L593.8 596.8 L603.3 601.2 L612.9 605.6 L622.4 610.0M508.6 575.8 L518.1 580.4 L527.7 585.1 L537.2 589.7 L546.8 594.3 L556.4 598.9 L565.9 603.6 L575.5 608.2 L585.0 612.8 L594.6 617.5 L604.2 622.1 L613.7 626.7 L623.3 631.3M509.3 594.4 L518.9 599.3 L528.4 604.1 L538.0 609.0 L547.6 613.8 L557.1 618.7 L566.7 623.5 L576.3 628.4 L585.9 633.2 L595.4 638.1 L605.0 643.0 L614.6 647.8 L624.1 652.7" stroke="#000" stroke-opacity="0.8" stroke-width="1" fill="none"/>
<path d="M405 219 L427 571 M495 222.5 L510 617 M424 563 L432 571 M505 613 L510 613" stroke="#000" stroke-width="1.1" fill="none"/>
<clipPath id="cp2"><path d="M241.00 214.00 L244.00 209.00 L300.00 204.00 L380.00 200.00 L500.00 202.00 L600.00 203.00 L700.00 204.00 L817.00 207.00 L817.00 208.50 L607.00 226.00Z"/></clipPath>
<path d="M241.00 214.00 L244.00 209.00 L300.00 204.00 L380.00 200.00 L500.00 202.00 L600.00 203.00 L700.00 204.00 L817.00 207.00 L817.00 208.50 L607.00 226.00Z" fill="#48007e"/>
<g clip-path="url(#cp2)">
<path d="M512 216 520 224 524 226 534 226 544 224 580 224 580 222 590 222 592 222 598 222 600 220 606 220 606 220 630 218 632 218 644 218 644 218 746 218 746 218 762 218 764 216 774 216 776 216 790 214 792 214 798 212 800 212 800 210 790 206 784 206 784 206 764 204 762 204 746 204 746 202 654 202 654 204 632 204 630 204 550 204 550 206 538 206 538 206 532 206 530 208 522 208 514 212 512 214Z" fill="#2e00a8" stroke="#2e00a8" stroke-width="0.9" fill-rule="evenodd"/>
<path d="M524 218 524 222 528 224 534 224 538 220 538 218 534 216 528 216Z" fill="#1c00d8" stroke="#1c00d8" stroke-width="0.9" fill-rule="evenodd"/>
<path d="M528 220 528 222 534 222 534 220 532 218 528 218Z" fill="#0000ff" stroke="#0000ff" stroke-width="0.9" fill-rule="evenodd"/>
</g>
<path d="M246.0 213.7 L247.5 208.7M250.8 213.8 L252.3 208.3M255.6 214.0 L257.1 207.8M260.4 214.2 L261.9 207.4M265.2 214.3 L266.7 207.0M270.0 214.5 L271.5 206.5M274.8 214.7 L276.3 206.1M279.6 214.8 L281.1 205.7M284.4 215.0 L285.9 205.3M289.2 215.1 L290.7 204.8M294.0 215.3 L295.5 204.4M298.8 215.5 L300.3 204.0M303.6 215.6 L305.1 203.7M308.4 215.8 L309.9 203.5M313.2 216.0 L314.7 203.3M318.0 216.1 L319.5 203.0M322.8 216.3 L324.3 202.8M327.6 216.5 L329.1 202.5M332.4 216.6 L333.9 202.3M337.2 216.8 L338.7 202.1M342.0 216.9 L343.5 201.8M346.8 217.1 L348.3 201.6M351.6 217.3 L353.1 201.3M356.4 217.4 L357.9 201.1M361.2 217.6 L362.7 200.9M366.0 217.8 L367.5 200.6M370.8 217.9 L372.3 200.4M375.6 218.1 L377.1 200.1M380.4 218.3 L381.9 200.0M385.2 218.4 L386.7 200.1M390.0 218.6 L391.5 200.2M394.8 218.8 L396.3 200.3M399.6 218.9 L401.1 200.4M404.4 219.1 L405.9 200.4M409.2 219.2 L410.7 200.5M414.0 219.4 L415.5 200.6M418.8 219.6 L420.3 200.7M423.6 219.7 L425.1 200.8M428.4 219.9 L429.9 200.8M433.2 220.1 L434.7 200.9M438.0 220.2 L439.5 201.0M442.8 220.4 L444.3 201.1M447.6 220.6 L449.1 201.2M452.4 220.7 L453.9 201.2M457.2 220.9 L458.7 201.3M462.0 221.0 L463.5 201.4M466.8 221.2 L468.3 201.5M471.6 221.4 L473.1 201.6M476.4 221.5 L477.9 201.6M481.2 221.7 L482.7 201.7M489.2 222.0 L490.7 201.8M497.2 222.3 L498.7 202.0M505.2 222.5 L506.7 202.1M513.2 222.8 L514.7 202.1M521.2 223.1 L522.7 202.2M529.2 223.3 L530.7 202.3M537.2 223.6 L538.7 202.4M545.2 223.9 L546.7 202.5M553.2 224.2 L554.7 202.5M561.2 224.4 L562.7 202.6M569.2 224.7 L570.7 202.7M577.2 225.0 L578.7 202.8M585.2 225.3 L586.7 202.9M593.2 225.5 L594.7 202.9M601.2 225.8 L602.7 203.0M609.2 225.8 L610.7 203.1M617.2 225.1 L618.7 203.2M625.2 224.4 L626.7 203.3M633.2 223.8 L634.7 203.3M641.2 223.1 L642.7 203.4M649.2 222.4 L650.7 203.5M657.2 221.7 L658.7 203.6M665.2 221.0 L666.7 203.7M673.2 220.3 L674.7 203.7M681.2 219.6 L682.7 203.8M689.2 219.0 L690.7 203.9M697.2 218.3 L698.7 204.0M705.2 217.6 L706.7 204.2M713.2 216.9 L714.7 204.4M721.2 216.2 L722.7 204.6M729.2 215.5 L730.7 204.8M737.2 214.8 L738.7 205.0M745.2 214.2 L746.7 205.2M753.2 213.5 L754.7 205.4M761.2 212.8 L762.7 205.6M769.2 212.1 L770.7 205.8M777.2 211.4 L778.7 206.0M785.2 210.7 L786.7 206.2M793.2 210.0 L794.7 206.4M801.2 209.4 L802.7 206.6M809.2 208.7 L810.7 206.8M244.0 212.7 L263.8 212.9 L283.5 213.1 L303.3 213.3 L323.0 213.6 L342.8 214.0 L362.6 214.3 L382.3 214.7 L402.1 215.3 L421.8 215.9 L441.6 216.5 L461.3 217.1 L481.1 217.7 L500.9 218.3 L520.6 218.9 L540.4 219.5 L560.1 220.0 L579.9 220.6 L599.7 221.2 L619.4 220.6 L639.2 219.3 L658.9 218.0 L678.7 216.6 L698.4 215.3 L718.2 214.1 L738.0 212.8 L757.7 211.6 L777.5 210.3 L797.2 209.1 L817.0 207.8M244.0 211.8 L263.8 211.5 L283.5 211.2 L303.3 210.9 L323.0 210.9 L342.8 210.9 L362.6 210.9 L382.3 211.0 L402.1 211.5 L421.8 212.1 L441.6 212.6 L461.3 213.2 L481.1 213.7 L500.9 214.2 L520.6 214.7 L540.4 215.2 L560.1 215.7 L579.9 216.2 L599.7 216.6 L619.4 216.2 L639.2 215.3 L658.9 214.4 L678.7 213.4 L698.4 212.5 L718.2 211.7 L738.0 210.9 L757.7 210.0 L777.5 209.2 L797.2 208.4 L817.0 207.6M244.0 210.8 L263.8 210.1 L283.5 209.3 L303.3 208.6 L323.0 208.2 L342.8 207.9 L362.6 207.6 L382.3 207.4 L402.1 207.8 L421.8 208.3 L441.6 208.8 L461.3 209.2 L481.1 209.7 L500.9 210.2 L520.6 210.5 L540.4 210.9 L560.1 211.3 L579.9 211.7 L599.7 212.1 L619.4 211.9 L639.2 211.3 L658.9 210.8 L678.7 210.2 L698.4 209.7 L718.2 209.3 L738.0 208.9 L757.7 208.5 L777.5 208.1 L797.2 207.8 L817.0 207.4M244.0 209.9 L263.8 208.6 L283.5 207.4 L303.3 206.2 L323.0 205.5 L342.8 204.9 L362.6 204.2 L382.3 203.7 L402.1 204.1 L421.8 204.5 L441.6 204.9 L461.3 205.3 L481.1 205.7 L500.9 206.1 L520.6 206.4 L540.4 206.7 L560.1 207.0 L579.9 207.3 L599.7 207.5 L619.4 207.5 L639.2 207.4 L658.9 207.2 L678.7 207.0 L698.4 206.8 L718.2 206.9 L738.0 206.9 L757.7 207.0 L777.5 207.1 L797.2 207.1 L817.0 207.2M380 216 L817 208" stroke="#000" stroke-opacity="0.7" stroke-width="1" fill="none"/>
<path d="M241 214 L244 209 L300 204 L380 200 L500 202 L600 203 L700 204 L817 207 M607 226 L817 208.5" stroke="#000" stroke-width="1" fill="none"/>
<clipPath id="cp3"><path d="M607.00 226.00 L817.00 208.00 L817.00 613.00 L625.00 674.00Z"/></clipPath>
<path d="M607.00 226.00 L817.00 208.00 L817.00 613.00 L625.00 674.00Z" fill="#2e00a8"/>
<g clip-path="url(#cp3)">
<path d="M662 580 666 572 676 564 684 560 696 556 706 556 708 554 734 554 734 556 744 556 762 564 768 568 772 572 774 576 774 586 772 590 772 594 770 598 770 600 766 610 764 614 760 618 754 622 744 624 734 626 734 626 708 626 708 626 700 624 694 622 670 600 672 596 668 592 666 592 660 590ZM602 226 602 680 822 680 822 226 798 226 796 226 792 226 790 222 778 212 766 202 666 202 652 212 644 218 638 226 634 226 634 226Z" fill="#1c00d8" stroke="#1c00d8" stroke-width="0.9" fill-rule="evenodd"/>
<path d="M648 624 640 632 632 646 632 654 630 656 630 668 632 670 632 674 634 680 680 680 682 672 682 672 682 652 682 652 682 648 676 636 668 626 660 622 652 622ZM790 594 784 598 782 602 780 610 780 620 784 632 788 636 792 636 798 632 802 626 802 618 804 618 804 612 802 612 802 606 798 598 794 594ZM656 594 656 598 662 602 666 602 670 598 670 594 666 592 662 592ZM774 564 774 568 778 572 782 572 788 568 788 564 782 562 778 562ZM660 512 656 516 656 522 660 526 666 526 668 522 668 516 666 512ZM602 236 602 412 614 440 624 458 644 478 652 484 652 486 656 490 658 492 668 492 684 498 688 498 694 500 700 500 700 500 730 500 730 500 736 500 738 498 746 498 762 492 776 486 788 476 806 458 814 446 822 430 822 236 806 236 800 234 796 234 796 234 792 234 790 232 786 232 780 230 776 230 774 230 770 230 768 228 754 228 754 226 744 226 744 226 728 226 728 224 722 224 720 224 710 224 710 224 704 224 702 226 688 226 686 226 670 228 668 228 662 228 662 230 656 230 656 230 650 230 650 232 630 234 626 236Z" fill="#0000ff" stroke="#0000ff" stroke-width="0.9" fill-rule="evenodd"/>
<path d="M654 636 652 636 646 644 646 652 644 652 646 660 648 666 652 670 654 672 662 672 664 670 670 664 670 656 672 654 670 652 670 648 668 640 664 636 662 636ZM790 608 788 610 788 616 790 620 792 620 794 616 794 612 792 608ZM658 594 658 598 660 600 666 600 670 598 670 594 666 592 660 592ZM774 564 774 568 778 570 784 570 786 568 786 564 784 562 778 562ZM794 240 782 236 768 238 762 236 746 234 744 234 732 234 732 232 700 232 698 234 686 234 686 234 678 234 676 236 664 236 652 246 642 260 630 272 626 280 626 284 626 284 626 292 626 294 622 310 620 320 620 320 620 326 618 328 618 364 620 364 620 370 620 372 620 376 622 378 624 390 630 410 638 424 646 436 654 444 652 454 656 464 656 482 660 486 664 486 668 482 668 472 668 472 668 458 668 458 686 466 694 470 704 470 706 472 726 472 726 470 732 470 732 470 740 468 750 464 752 464 770 452 782 440 794 424 800 410 800 408 806 396 806 394 810 382 810 372 812 370 812 364 812 364 812 328 812 326 812 320 810 320 810 310 804 294 806 264 806 264 806 260 802 248 800 246Z" fill="#0070ff" stroke="#0070ff" stroke-width="0.9" fill-rule="evenodd"/>
<path d="M790 242 788 242 786 240 774 240 766 244 762 248 758 256 758 268 756 270 750 264 738 256 724 252 708 252 694 256 688 260 674 270 668 266 666 266 662 264 648 264 640 268 632 276 632 278 630 282 630 300 632 302 632 314 632 314 632 326 634 326 634 338 634 340 634 350 636 352 636 362 636 364 638 398 642 406 646 410 658 414 658 424 658 426 658 438 660 440 660 442 658 444 654 448 654 456 658 462 660 462 662 480 662 462 664 462 668 456 668 448 664 444 660 442 660 422 658 420 658 414 660 414 666 412 668 416 680 426 686 430 700 436 710 438 710 438 720 438 720 438 730 436 744 430 754 424 762 416 770 404 778 388 780 384 782 382 784 382 790 380 796 374 798 368 798 356 798 356 800 308 800 306 800 284 802 282 802 256 798 248Z" fill="#00c0ff" stroke="#00c0ff" stroke-width="0.9" fill-rule="evenodd"/>
<path d="M658 444 654 450 654 456 658 460 662 460 666 456 666 450 662 444ZM642 272 636 278 634 284 634 296 636 298 634 312 636 314 636 326 638 326 638 340 638 340 638 354 640 354 642 396 644 402 650 408 656 410 664 410 672 402 674 396 674 370 674 368 676 370 678 374 684 386 694 396 704 402 708 402 708 402 722 402 724 402 726 402 738 396 746 386 754 374 758 356 758 334 758 334 758 330 754 316 746 304 738 296 724 288 708 288 694 296 684 304 680 310 676 320 676 318 676 314 676 312 676 284 676 284 676 280 672 276 666 270 660 268 652 268 650 268 648 268ZM776 244 768 248 764 252 762 258 762 296 764 298 764 332 766 334 766 352 766 354 766 368 770 374 774 378 784 378 790 376 794 370 794 368 798 258 794 252 790 248 784 244Z" fill="#00e8d8" stroke="#00e8d8" stroke-width="0.9" fill-rule="evenodd"/>
<path d="M660 446 658 446 656 450 656 456 660 460 662 458 666 454 664 448ZM654 272 652 272 650 272 644 276 640 282 640 286 638 286 640 294 638 298 636 310 636 312 636 316 638 322 642 326 642 342 642 342 642 358 644 360 644 376 644 376 644 392 646 394 646 398 650 404 654 406 662 406 666 404 670 398 670 390 670 388 670 342 672 342 672 324 674 316 676 306 672 296 672 286 670 280 668 278 664 274 658 272ZM776 248 770 252 766 256 766 260 766 272 766 272 766 276 764 284 764 296 766 304 768 306 768 342 770 344 770 350 768 350 770 366 772 370 774 374 782 376 786 374 790 370 792 366 792 358 792 356 792 350 792 350 792 304 796 296 796 284 794 280 794 260 790 254 786 250Z" fill="#00b890" stroke="#00b890" stroke-width="0.9" fill-rule="evenodd"/>
<path d="M652 276 646 280 644 284 644 290 640 294 638 302 638 316 640 324 646 330 646 366 648 366 648 374 646 378 646 384 648 392 648 398 652 402 654 404 660 404 662 402 666 398 666 392 670 384 670 378 666 372 668 326 670 324 674 316 674 302 670 294 668 290 668 284 664 280 660 276ZM778 252 774 254 772 256 770 262 770 272 766 280 766 284 764 284 764 296 768 306 772 310 772 344 770 352 770 360 776 370 778 372 784 372 786 370 788 364 790 360 790 356 792 356 790 348 788 344 788 308 794 300 794 298 794 296 794 284 794 284 794 280 790 274 790 262 788 258 786 254Z" fill="#0a8040" stroke="#0a8040" stroke-width="0.9" fill-rule="evenodd"/>
<path d="M654 280 648 284 648 288 642 294 638 302 638 316 644 326 650 330 650 370 646 378 646 384 650 392 652 394 652 398 654 400 658 400 662 398 664 394 666 392 668 384 668 378 666 372 664 370 664 330 668 326 672 316 672 302 668 294 664 288 662 284 658 280ZM776 258 774 260 774 270 770 274 766 280 766 284 766 284 766 296 768 304 770 308 776 312 776 342 772 348 770 356 772 362 778 368 782 368 788 362 790 356 790 348 784 342 784 310 788 308 792 300 792 298 794 296 794 284 790 276 788 274 784 270 784 260 782 258Z" fill="#2a7a10" stroke="#2a7a10" stroke-width="0.9" fill-rule="evenodd"/>
<path d="M654 286 652 288 648 290 642 298 640 304 640 314 644 324 648 328 654 330 654 358 654 358 654 368 648 376 648 384 650 390 656 394 656 396 660 396 660 394 666 390 668 384 668 380 666 374 660 368 660 330 664 328 668 324 672 314 672 304 668 294 664 290 660 290 658 286ZM778 262 778 270 774 272 768 278 766 284 766 296 770 306 774 308 778 310 780 314 780 342 774 346 772 354 774 360 778 364 780 366 784 364 788 360 790 354 788 346 782 342 782 314 780 310 786 308 790 302 792 296 792 284 788 276 786 272 780 270 780 262Z" fill="#88b000" stroke="#88b000" stroke-width="0.9" fill-rule="evenodd"/>
<path d="M654 370 650 376 648 384 650 388 654 392 660 392 666 386 666 380 664 374 660 370ZM778 344 774 346 772 354 774 356 774 358 776 362 782 364 786 360 788 352 788 352 788 348 784 344ZM652 290 648 292 644 296 640 304 640 314 642 320 648 326 654 328 658 328 662 326 668 320 670 314 670 304 668 296 662 292 658 290ZM776 272 770 278 768 284 768 296 770 304 774 308 776 308 782 308 788 304 792 296 792 284 788 278 784 274 782 272Z" fill="#dde600" stroke="#dde600" stroke-width="0.9" fill-rule="evenodd"/>
<path d="M656 372 654 372 650 376 650 382 650 384 650 386 654 390 660 392 662 390 664 386 666 380 664 380 664 376 662 372ZM780 344 776 348 774 354 776 360 778 362 782 362 786 360 788 354 786 348 784 346ZM652 292 644 298 642 302 642 312 644 320 650 326 652 326 660 326 666 320 668 316 670 306 666 298 662 292 660 292ZM778 274 772 276 768 284 768 296 772 304 778 308 782 308 786 304 790 296 790 284 786 276 782 274Z" fill="#ffee00" stroke="#ffee00" stroke-width="0.9" fill-rule="evenodd"/>
<path d="M658 372 652 376 650 382 652 388 658 390 662 388 664 382 662 376ZM652 292 648 296 646 298 642 306 642 312 646 320 650 324 658 326 660 324 666 320 668 312 668 306 668 306 668 302 664 296 658 292ZM776 276 774 276 770 282 770 284 770 296 770 300 774 304 776 306 782 306 784 304 788 300 790 296 790 284 788 282 784 276 782 276Z" fill="#ffc800" stroke="#ffc800" stroke-width="0.9" fill-rule="evenodd"/>
<path d="M656 294 654 294 652 294 648 298 646 300 644 308 646 318 652 324 658 324 660 322 666 318 668 310 666 304 664 298 660 294 656 294ZM778 276 772 280 770 284 770 296 776 304 782 304 786 300 788 296 788 284 784 278Z" fill="#ffa800" stroke="#ffa800" stroke-width="0.9" fill-rule="evenodd"/>
<path d="M652 296 648 300 646 304 646 314 650 320 654 322 658 322 662 320 666 314 666 304 664 300 658 296ZM778 278 776 278 772 284 772 296 776 302 780 304 782 302 788 296 788 284 782 278Z" fill="#ff7800" stroke="#ff7800" stroke-width="0.9" fill-rule="evenodd"/>
<path d="M654 296 650 298 646 304 646 314 650 320 652 320 658 320 662 318 664 314 664 304 660 298ZM778 280 774 282 772 286 772 292 774 300 778 302 782 302 784 300 786 296 788 290 784 282 782 280Z" fill="#ff4500" stroke="#ff4500" stroke-width="0.9" fill-rule="evenodd"/>
<path d="M654 298 648 302 648 312 652 318 658 320 662 316 664 312 664 306 662 302 660 300ZM778 280 774 284 772 292 774 298 776 300 780 300 784 298 786 290 784 284 782 282Z" fill="#ff0000" stroke="#ff0000" stroke-width="0.9" fill-rule="evenodd"/>
</g>
<defs><mask id="emask" maskUnits="userSpaceOnUse" x="600" y="200" width="230" height="480"><rect x="600" y="200" width="230" height="480" fill="#fff"/><ellipse cx="655" cy="308.4" rx="15.6" ry="19.4" fill="#000"/><ellipse cx="657" cy="381" rx="14.3" ry="18.0" fill="#000"/><ellipse cx="660" cy="452" rx="11.3" ry="14.0" fill="#000"/><ellipse cx="662" cy="518" rx="14.3" ry="16.0" fill="#000"/><ellipse cx="663" cy="590" rx="13.3" ry="15.0" fill="#000"/><ellipse cx="779" cy="290" rx="13.3" ry="19.0" fill="#000"/><ellipse cx="780" cy="353" rx="13.3" ry="17.0" fill="#000"/><ellipse cx="780" cy="560" rx="13.3" ry="15.0" fill="#000"/></mask></defs>
<clipPath id="eclip"><path d="M607 226 L817 208 L817 613 L625 674Z"/></clipPath><g clip-path="url(#eclip)"><path d="M635.0 228.3 L636.9 241.3 L638.4 254.1 L639.4 266.7 L640.0 279.1 L640.0 291.4 L639.6 303.5 L638.9 315.5 L637.8 327.5 L636.7 339.5 L635.7 351.6 L634.9 363.8 L634.4 376.2 L634.4 388.7 L634.9 401.5 L635.9 414.5 L637.4 427.7 L639.2 441.1 L641.2 454.6 L643.2 468.3 L645.1 482.0 L646.8 495.8 L648.0 509.6 L648.8 523.2 L649.1 536.8 L648.9 550.3 L648.2 563.6 L647.3 576.8 L646.2 589.8 L645.1 602.7 L644.2 615.5 L643.5 628.3 L643.3 641.0 L643.6 653.7 L644.4 666.4M662.2 225.4 L663.3 238.0 L664.1 250.4 L664.5 262.8 L664.6 275.0 L664.2 287.3 L663.6 299.5 L662.8 311.8 L661.9 324.2 L661.1 336.7 L660.6 349.4 L660.3 362.2 L660.4 375.1 L660.9 388.1 L661.8 401.2 L663.0 414.4 L664.5 427.5 L666.1 440.6 L667.8 453.7 L669.3 466.6 L670.6 479.5 L671.5 492.2 L672.1 504.8 L672.3 517.2 L672.1 529.6 L671.6 541.9 L670.8 554.1 L670.0 566.3 L669.2 578.6 L668.5 591.0 L668.1 603.5 L668.0 616.2 L668.3 629.0 L669.1 642.1 L670.2 655.4M685.8 218.1 L686.2 230.5 L686.5 243.1 L686.8 255.7 L687.1 268.5 L687.4 281.5 L687.7 294.6 L688.0 307.8 L688.4 321.1 L688.7 334.5 L689.0 348.0 L689.3 361.4 L689.6 374.8 L690.0 388.1 L690.3 401.3 L690.7 414.3 L691.0 427.0 L691.4 439.6 L691.8 452.0 L692.1 464.1 L692.4 476.1 L692.8 487.9 L693.1 499.6 L693.4 511.3 L693.7 523.0 L694.0 534.7 L694.3 546.6 L694.6 558.6 L695.0 570.8 L695.3 583.2 L695.6 595.8 L695.9 608.6 L696.3 621.6 L696.6 634.8 L697.0 648.2M708.2 212.1 L708.6 224.7 L709.4 237.5 L710.4 250.6 L711.8 263.8 L713.2 277.2 L714.7 290.6 L716.1 304.2 L717.2 317.7 L718.0 331.2 L718.4 344.6 L718.5 357.9 L718.1 371.0 L717.5 383.9 L716.7 396.6 L715.7 409.1 L714.8 421.4 L714.0 433.6 L713.5 445.6 L713.3 457.6 L713.5 469.5 L714.1 481.4 L715.1 493.4 L716.3 505.5 L717.7 517.6 L719.2 530.0 L720.7 542.4 L721.9 555.0 L722.8 567.6 L723.4 580.4 L723.6 593.2 L723.5 606.1 L722.9 618.9 L722.2 631.6 L721.3 644.3M733.5 211.7 L734.5 224.4 L735.8 237.2 L737.4 250.0 L739.2 262.9 L740.9 275.8 L742.5 288.6 L743.8 301.3 L744.6 313.9 L745.0 326.4 L744.8 338.8 L744.1 351.0 L743.1 363.2 L741.8 375.3 L740.4 387.4 L739.1 399.4 L738.0 411.5 L737.2 423.7 L736.9 436.1 L737.2 448.5 L737.9 461.1 L739.0 473.8 L740.6 486.7 L742.3 499.7 L744.1 512.8 L745.7 525.9 L747.2 539.1 L748.2 552.2 L748.7 565.2 L748.8 578.1 L748.3 590.8 L747.4 603.3 L746.2 615.6 L744.9 627.7 L743.5 639.5M762.5 214.8 L763.3 227.2 L764.1 239.5 L765.1 251.6 L766.0 263.6 L766.8 275.4 L767.5 287.1 L767.9 298.6 L768.1 310.0 L768.0 321.4 L767.6 332.7 L767.1 344.1 L766.5 355.6 L765.8 367.2 L765.1 379.0 L764.6 391.0 L764.3 403.3 L764.2 415.7 L764.4 428.4 L764.8 441.2 L765.5 454.3 L766.3 467.4 L767.3 480.6 L768.2 493.9 L769.1 507.1 L769.8 520.2 L770.3 533.1 L770.6 546.0 L770.6 558.6 L770.4 571.0 L769.9 583.3 L769.3 595.3 L768.6 607.2 L768.0 618.9 L767.4 630.6M791.6 215.2 L791.1 227.2 L790.7 238.9 L790.2 250.5 L789.8 261.8 L789.6 273.0 L789.5 284.2 L789.6 295.3 L789.8 306.5 L790.2 317.7 L790.7 329.0 L791.3 340.5 L791.9 352.2 L792.5 364.0 L793.0 376.0 L793.3 388.2 L793.5 400.5 L793.5 413.0 L793.3 425.5 L793.0 438.1 L792.6 450.6 L792.1 463.1 L791.7 475.6 L791.3 487.9 L791.0 500.1 L790.8 512.2 L790.8 524.1 L791.0 536.0 L791.3 547.8 L791.8 559.5 L792.3 571.3 L792.9 583.1 L793.5 594.9 L794.1 606.9 L794.5 619.0M609.5 252.9 L616.4 253.5 L623.2 253.9 L630.0 254.2 L636.7 254.2 L643.2 253.9 L649.5 253.3 L655.5 252.3 L661.3 251.1 L666.9 249.7 L672.3 248.0 L677.5 246.2 L682.6 244.4 L687.8 242.6 L693.0 241.0 L698.2 239.6 L703.7 238.4 L709.4 237.5 L715.2 237.0 L721.3 236.7 L727.6 236.8 L734.1 237.1 L740.8 237.5 L747.5 238.1 L754.2 238.7 L760.8 239.3 L767.4 239.7 L773.9 239.9 L780.1 239.8 L786.2 239.4 L792.1 238.7 L797.9 237.7 L803.5 236.4 L809.1 234.9 L814.7 233.2M611.4 279.5 L618.4 279.7 L625.3 279.7 L632.0 279.6 L638.4 279.3 L644.6 278.7 L650.6 277.9 L656.3 276.9 L661.8 275.7 L667.2 274.3 L672.5 272.8 L677.8 271.2 L683.1 269.7 L688.5 268.2 L694.0 266.8 L699.7 265.6 L705.7 264.6 L711.8 263.8 L718.1 263.2 L724.5 262.9 L731.0 262.8 L737.5 262.9 L744.1 263.0 L750.5 263.2 L756.9 263.4 L763.0 263.6 L769.0 263.6 L774.8 263.4 L780.4 263.0 L785.8 262.4 L791.2 261.6 L796.5 260.5 L801.8 259.2 L807.2 257.8 L812.7 256.3M612.4 305.6 L619.2 305.3 L625.7 304.8 L632.0 304.3 L638.1 303.7 L644.0 302.9 L649.7 302.1 L655.3 301.1 L660.8 300.1 L666.3 298.9 L671.9 297.8 L677.5 296.6 L683.3 295.4 L689.2 294.3 L695.4 293.2 L701.7 292.2 L708.1 291.4 L714.7 290.6 L721.3 290.0 L727.9 289.5 L734.5 289.0 L740.9 288.7 L747.2 288.3 L753.3 288.0 L759.1 287.7 L764.8 287.3 L770.2 286.8 L775.4 286.3 L780.6 285.6 L785.7 284.9 L790.8 284.0 L795.9 283.0 L801.2 281.9 L806.7 280.8 L812.4 279.6M612.5 331.2 L618.7 330.3 L624.8 329.4 L630.7 328.6 L636.4 327.7 L642.1 326.9 L647.7 326.1 L653.3 325.3 L659.0 324.6 L664.9 323.9 L670.9 323.1 L677.1 322.4 L683.4 321.7 L690.0 320.9 L696.7 320.2 L703.5 319.4 L710.4 318.6 L717.2 317.7 L723.9 316.9 L730.5 316.0 L736.9 315.1 L743.1 314.1 L749.0 313.2 L754.7 312.3 L760.2 311.4 L765.5 310.5 L770.6 309.6 L775.7 308.7 L780.8 307.9 L785.9 307.1 L791.1 306.3 L796.5 305.5 L802.1 304.8 L808.0 304.0 L814.0 303.3M612.1 356.5 L617.7 355.1 L623.3 353.9 L628.8 352.8 L634.3 351.8 L639.9 351.0 L645.5 350.4 L651.4 349.9 L657.5 349.6 L663.7 349.3 L670.2 349.0 L676.9 348.7 L683.8 348.3 L690.7 347.9 L697.7 347.3 L704.7 346.6 L711.7 345.7 L718.4 344.6 L725.0 343.4 L731.4 342.1 L737.5 340.7 L743.4 339.2 L749.0 337.6 L754.5 336.1 L759.8 334.7 L765.0 333.4 L770.3 332.2 L775.5 331.1 L780.9 330.2 L786.5 329.5 L792.2 328.9 L798.1 328.4 L804.2 328.1 L810.4 327.8 L816.8 327.5M611.7 381.6 L617.0 379.9 L622.2 378.5 L627.5 377.3 L633.0 376.4 L638.7 375.7 L644.6 375.3 L650.7 375.1 L657.1 375.1 L663.7 375.1 L670.5 375.2 L677.4 375.2 L684.4 375.1 L691.4 374.7 L698.3 374.2 L705.1 373.4 L711.7 372.3 L718.1 371.0 L724.3 369.4 L730.3 367.6 L736.1 365.7 L741.7 363.7 L747.2 361.7 L752.7 359.8 L758.1 358.0 L763.7 356.3 L769.3 355.0 L775.1 353.9 L781.1 353.0 L787.2 352.4 L793.5 352.1 L800.0 351.9 L806.5 351.9 L813.1 352.0 L819.6 352.0M612.1 406.9 L617.1 405.1 L622.4 403.7 L627.8 402.5 L633.5 401.7 L639.4 401.2 L645.5 400.9 L651.9 401.0 L658.4 401.1 L665.1 401.3 L671.9 401.5 L678.7 401.6 L685.4 401.5 L692.0 401.2 L698.4 400.5 L704.7 399.5 L710.8 398.2 L716.7 396.6 L722.4 394.7 L728.0 392.5 L733.5 390.3 L739.0 387.9 L744.6 385.6 L750.3 383.5 L756.1 381.5 L762.1 379.8 L768.3 378.4 L774.6 377.3 L781.2 376.6 L787.9 376.2 L794.7 376.0 L801.5 376.1 L808.2 376.2 L814.9 376.5 L821.4 376.6M613.3 432.8 L618.6 431.1 L624.2 429.7 L629.9 428.6 L635.9 427.8 L642.0 427.4 L648.3 427.2 L654.8 427.3 L661.3 427.4 L667.7 427.6 L674.1 427.7 L680.4 427.7 L686.6 427.4 L692.5 426.9 L698.3 426.0 L703.9 424.8 L709.4 423.2 L714.8 421.4 L720.1 419.3 L725.5 417.0 L731.0 414.6 L736.6 412.1 L742.4 409.8 L748.3 407.6 L754.6 405.6 L761.0 404.0 L767.6 402.6 L774.4 401.7 L781.3 401.0 L788.3 400.6 L795.2 400.5 L802.0 400.6 L808.7 400.8 L815.2 400.9 L821.4 401.0M615.5 459.5 L621.2 457.9 L627.2 456.6 L633.3 455.5 L639.6 454.8 L645.9 454.3 L652.3 454.0 L658.5 453.8 L664.7 453.7 L670.8 453.6 L676.6 453.4 L682.3 453.1 L687.8 452.5 L693.1 451.7 L698.2 450.6 L703.3 449.2 L708.4 447.5 L713.5 445.6 L718.7 443.5 L724.1 441.2 L729.7 438.9 L735.5 436.6 L741.5 434.4 L747.8 432.4 L754.3 430.6 L761.0 429.0 L767.8 427.8 L774.7 426.8 L781.5 426.2 L788.3 425.7 L795.0 425.5 L801.5 425.3 L807.7 425.3 L813.8 425.1 L819.7 424.9M618.0 486.9 L624.3 485.5 L630.7 484.2 L637.1 483.1 L643.5 482.2 L649.9 481.5 L656.0 480.9 L662.0 480.3 L667.8 479.8 L673.3 479.2 L678.7 478.6 L683.8 477.8 L688.8 476.9 L693.7 475.8 L698.5 474.5 L703.4 473.0 L708.4 471.3 L713.5 469.5 L718.9 467.5 L724.5 465.6 L730.3 463.5 L736.3 461.6 L742.6 459.7 L749.0 457.9 L755.6 456.3 L762.2 454.9 L768.8 453.7 L775.3 452.7 L781.8 451.8 L788.0 451.1 L794.1 450.5 L800.0 449.9 L805.7 449.4 L811.3 448.8 L816.8 448.1M620.4 515.0 L627.1 513.6 L633.7 512.3 L640.2 511.0 L646.5 509.8 L652.6 508.7 L658.5 507.6 L664.1 506.5 L669.5 505.3 L674.7 504.2 L679.7 503.1 L684.6 501.9 L689.5 500.6 L694.3 499.3 L699.3 497.9 L704.4 496.4 L709.6 494.9 L715.1 493.4 L720.8 491.8 L726.7 490.2 L732.8 488.7 L739.0 487.1 L745.3 485.6 L751.6 484.1 L758.0 482.6 L764.2 481.3 L770.3 480.0 L776.2 478.7 L782.0 477.5 L787.6 476.4 L793.0 475.3 L798.3 474.2 L803.6 473.1 L808.8 471.9 L814.0 470.8M622.1 543.4 L628.8 541.9 L635.2 540.4 L641.5 538.9 L647.6 537.3 L653.4 535.6 L659.0 533.9 L664.4 532.1 L669.5 530.4 L674.6 528.7 L679.7 527.1 L684.7 525.5 L689.8 524.0 L695.1 522.6 L700.5 521.3 L706.0 520.0 L711.8 518.8 L717.7 517.6 L723.8 516.5 L730.0 515.4 L736.3 514.3 L742.5 513.1 L748.7 511.9 L754.7 510.6 L760.6 509.2 L766.3 507.8 L771.8 506.3 L777.1 504.7 L782.3 503.1 L787.3 501.4 L792.2 499.7 L797.1 497.9 L802.1 496.2 L807.2 494.6 L812.4 492.9M622.8 571.6 L629.1 570.0 L635.2 568.2 L641.1 566.3 L646.8 564.2 L652.3 562.0 L657.7 559.7 L663.0 557.4 L668.2 555.2 L673.5 553.0 L678.8 551.1 L684.3 549.2 L690.0 547.6 L695.8 546.2 L701.8 545.0 L708.0 544.0 L714.3 543.2 L720.7 542.4 L727.0 541.7 L733.4 541.0 L739.6 540.2 L745.7 539.3 L751.5 538.3 L757.2 537.1 L762.6 535.7 L767.8 534.0 L772.8 532.2 L777.7 530.2 L782.5 528.1 L787.2 525.8 L792.0 523.6 L796.9 521.3 L802.0 519.1 L807.2 517.0 L812.7 515.0M622.7 599.3 L628.5 597.5 L634.0 595.4 L639.5 593.0 L644.8 590.5 L650.2 587.8 L655.5 585.1 L660.8 582.4 L666.3 579.8 L672.0 577.4 L677.9 575.3 L683.9 573.4 L690.2 571.8 L696.6 570.5 L703.1 569.5 L709.7 568.7 L716.3 568.1 L722.8 567.6 L729.3 567.2 L735.5 566.8 L741.5 566.2 L747.3 565.4 L752.9 564.4 L758.2 563.1 L763.3 561.5 L768.2 559.6 L773.0 557.5 L777.8 555.1 L782.6 552.5 L787.5 549.8 L792.6 547.1 L797.8 544.4 L803.2 541.9 L808.9 539.5 L814.7 537.4M622.2 626.2 L627.4 624.1 L632.6 621.7 L637.7 619.1 L642.8 616.3 L648.1 613.3 L653.6 610.4 L659.2 607.5 L665.1 604.8 L671.1 602.3 L677.4 600.1 L683.9 598.2 L690.6 596.7 L697.3 595.5 L704.0 594.6 L710.7 594.0 L717.2 593.6 L723.6 593.2 L729.8 592.9 L735.8 592.5 L741.5 591.9 L747.0 591.0 L752.3 589.9 L757.4 588.4 L762.4 586.6 L767.4 584.5 L772.4 582.0 L777.5 579.3 L782.8 576.4 L788.2 573.5 L793.8 570.6 L799.5 567.7 L805.4 565.0 L811.5 562.6 L817.7 560.5M622.0 652.2 L626.9 649.9 L631.8 647.4 L636.8 644.6 L642.0 641.7 L647.4 638.7 L653.1 635.8 L659.0 632.9 L665.2 630.3 L671.5 627.9 L678.1 625.8 L684.7 624.0 L691.3 622.5 L697.9 621.4 L704.4 620.5 L710.8 619.9 L717.0 619.3 L722.9 618.9 L728.7 618.4 L734.3 617.8 L739.7 617.0 L744.9 615.9 L750.1 614.5 L755.3 612.8 L760.6 610.8 L765.9 608.5 L771.4 605.9 L777.1 603.1 L782.9 600.1 L788.9 597.1 L795.1 594.2 L801.4 591.4 L807.7 588.8 L814.0 586.5 L820.3 584.4" mask="url(#emask)" stroke="#000" stroke-opacity="0.8" stroke-width="1" fill="none"/></g>
<ellipse cx="655" cy="308.4" rx="7.6" ry="9.7" fill="#0000ff"/><path d="M662.0 312.1 L657.9 317.4 L652.1 317.4 L648.0 312.1 L648.0 304.7 L652.1 299.4 L657.9 299.4 L662.0 304.7ZM669.4 315.8 L661.0 326.3 L649.0 326.3 L640.6 315.8 L640.6 301.0 L649.0 290.5 L661.0 290.5 L669.4 301.0ZM662.0 312.1 L669.4 315.8M657.9 317.4 L661.0 326.3M652.1 317.4 L649.0 326.3M648.0 312.1 L640.6 315.8M648.0 304.7 L640.6 301.0M652.1 299.4 L649.0 290.5M657.9 299.4 L661.0 290.5M662.0 304.7 L669.4 301.0" stroke="#000" stroke-opacity="0.85" stroke-width="1" fill="none"/><ellipse cx="657" cy="381" rx="7" ry="9" fill="#2000d0"/><path d="M663.5 384.4 L659.7 389.3 L654.3 389.3 L650.5 384.4 L650.5 377.6 L654.3 372.7 L659.7 372.7 L663.5 377.6ZM670.3 387.9 L662.5 397.6 L651.5 397.6 L643.7 387.9 L643.7 374.1 L651.5 364.4 L662.5 364.4 L670.3 374.1ZM663.5 384.4 L670.3 387.9M659.7 389.3 L662.5 397.6M654.3 389.3 L651.5 397.6M650.5 384.4 L643.7 387.9M650.5 377.6 L643.7 374.1M654.3 372.7 L651.5 364.4M659.7 372.7 L662.5 364.4M663.5 377.6 L670.3 374.1" stroke="#000" stroke-opacity="0.85" stroke-width="1" fill="none"/><ellipse cx="660" cy="452" rx="5.5" ry="7" fill="#2e00b0"/><path d="M665.1 454.7 L662.1 458.5 L657.9 458.5 L654.9 454.7 L654.9 449.3 L657.9 445.5 L662.1 445.5 L665.1 449.3ZM670.4 457.4 L664.3 464.9 L655.7 464.9 L649.6 457.4 L649.6 446.6 L655.7 439.1 L664.3 439.1 L670.4 446.6ZM665.1 454.7 L670.4 457.4M662.1 458.5 L664.3 464.9M657.9 458.5 L655.7 464.9M654.9 454.7 L649.6 457.4M654.9 449.3 L649.6 446.6M657.9 445.5 L655.7 439.1M662.1 445.5 L664.3 439.1M665.1 449.3 L670.4 446.6" stroke="#000" stroke-opacity="0.85" stroke-width="1" fill="none"/><path d="M668.5 521.1 L664.7 525.4 L659.3 525.4 L655.5 521.1 L655.5 514.9 L659.3 510.6 L664.7 510.6 L668.5 514.9ZM675.3 524.1 L667.5 532.8 L656.5 532.8 L648.7 524.1 L648.7 511.9 L656.5 503.2 L667.5 503.2 L675.3 511.9ZM668.5 521.1 L675.3 524.1M664.7 525.4 L667.5 532.8M659.3 525.4 L656.5 532.8M655.5 521.1 L648.7 524.1M655.5 514.9 L648.7 511.9M659.3 510.6 L656.5 503.2M664.7 510.6 L667.5 503.2M668.5 514.9 L675.3 511.9" stroke="#000" stroke-opacity="0.85" stroke-width="1" fill="none"/><path d="M669.0 592.9 L665.5 596.9 L660.5 596.9 L657.0 592.9 L657.0 587.1 L660.5 583.1 L665.5 583.1 L669.0 587.1ZM675.3 595.7 L668.1 603.9 L657.9 603.9 L650.7 595.7 L650.7 584.3 L657.9 576.1 L668.1 576.1 L675.3 584.3ZM669.0 592.9 L675.3 595.7M665.5 596.9 L668.1 603.9M660.5 596.9 L657.9 603.9M657.0 592.9 L650.7 595.7M657.0 587.1 L650.7 584.3M660.5 583.1 L657.9 576.1M665.5 583.1 L668.1 576.1M669.0 587.1 L675.3 584.3" stroke="#000" stroke-opacity="0.85" stroke-width="1" fill="none"/><ellipse cx="779" cy="290" rx="6.5" ry="9.5" fill="#0000ff"/><path d="M785.0 293.6 L781.5 298.8 L776.5 298.8 L773.0 293.6 L773.0 286.4 L776.5 281.2 L781.5 281.2 L785.0 286.4ZM791.3 297.3 L784.1 307.6 L773.9 307.6 L766.7 297.3 L766.7 282.7 L773.9 272.4 L784.1 272.4 L791.3 282.7ZM785.0 293.6 L791.3 297.3M781.5 298.8 L784.1 307.6M776.5 298.8 L773.9 307.6M773.0 293.6 L766.7 297.3M773.0 286.4 L766.7 282.7M776.5 281.2 L773.9 272.4M781.5 281.2 L784.1 272.4M785.0 286.4 L791.3 282.7" stroke="#000" stroke-opacity="0.85" stroke-width="1" fill="none"/><ellipse cx="780" cy="353" rx="6.5" ry="8.5" fill="#2000d0"/><path d="M786.0 356.3 L782.5 360.9 L777.5 360.9 L774.0 356.3 L774.0 349.7 L777.5 345.1 L782.5 345.1 L786.0 349.7ZM792.3 359.5 L785.1 368.7 L774.9 368.7 L767.7 359.5 L767.7 346.5 L774.9 337.3 L785.1 337.3 L792.3 346.5ZM786.0 356.3 L792.3 359.5M782.5 360.9 L785.1 368.7M777.5 360.9 L774.9 368.7M774.0 356.3 L767.7 359.5M774.0 349.7 L767.7 346.5M777.5 345.1 L774.9 337.3M782.5 345.1 L785.1 337.3M786.0 349.7 L792.3 346.5" stroke="#000" stroke-opacity="0.85" stroke-width="1" fill="none"/><path d="M786.0 562.9 L782.5 566.9 L777.5 566.9 L774.0 562.9 L774.0 557.1 L777.5 553.1 L782.5 553.1 L786.0 557.1ZM792.3 565.7 L785.1 573.9 L774.9 573.9 L767.7 565.7 L767.7 554.3 L774.9 546.1 L785.1 546.1 L792.3 554.3ZM786.0 562.9 L792.3 565.7M782.5 566.9 L785.1 573.9M777.5 566.9 L774.9 573.9M774.0 562.9 L767.7 565.7M774.0 557.1 L767.7 554.3M777.5 553.1 L774.9 546.1M782.5 553.1 L785.1 546.1M786.0 557.1 L792.3 554.3" stroke="#000" stroke-opacity="0.85" stroke-width="1" fill="none"/>
<path d="M607 226 L625 674 L817 613 L817 208" stroke="#000" stroke-width="1" fill="none"/>
<clipPath id="cp4"><path d="M695.00 371.00 L698.00 364.00 L706.00 360.00 L817.00 366.50 L1002.00 397.60 L1006.00 401.00 L1008.00 408.00 L1003.00 574.00 L998.00 586.00 L947.00 604.00 L940.00 604.00 L742.00 534.00 L712.00 522.00 L702.00 515.00 L697.00 505.00Z"/></clipPath>
<path d="M695.00 371.00 L698.00 364.00 L706.00 360.00 L817.00 366.50 L1002.00 397.60 L1006.00 401.00 L1008.00 408.00 L1003.00 574.00 L998.00 586.00 L947.00 604.00 L940.00 604.00 L742.00 534.00 L712.00 522.00 L702.00 515.00 L697.00 505.00Z" fill="#4b0084"/>
<g clip-path="url(#cp4)">
<path d="M690 354 690 610 1014 610 1014 522 1012 536 1006 554 998 568 994 572 986 580 976 584 962 584 960 584 954 586 944 590 930 602 920 606 914 606 908 604 900 596 890 570 888 556 888 554 888 548 886 548 886 536 886 536 886 504 888 502 888 496 888 494 892 476 900 454 908 446 916 442 934 440 940 436 942 430 936 428 932 428 930 430 904 430 904 428 900 428 878 418 874 412 874 408 882 402 900 396 924 396 926 398 936 398 938 400 942 400 952 402 966 404 968 404 974 404 980 406 990 412 1000 426 1010 448 1010 450 1012 460 1012 464 1014 464 1014 470 1014 354Z" fill="#3000b0" stroke="#3000b0" stroke-width="0.9" fill-rule="evenodd"/>
<path d="M690 354 690 610 788 610 788 354Z" fill="#1d00e2" stroke="#1d00e2" stroke-width="0.9" fill-rule="evenodd"/>
<path d="M690 354 690 610 738 610 738 404 742 396 746 380 748 378 762 380 766 378 766 372 766 370 762 368 746 366 742 354Z" fill="#0000ff" stroke="#0000ff" stroke-width="0.9" fill-rule="evenodd"/>
<path d="M694 500 690 502 690 540 698 542 708 542 718 538 724 532 726 526 726 516 724 508 718 502 712 500 708 500 708 498 698 498 696 500ZM736 354 690 354 690 416 696 418 696 470 698 472 698 470 698 420 700 418 712 418 724 412 736 400 740 392 740 388 742 384 742 376 742 376 760 376 760 378 762 376 764 374 764 372 760 370 742 368 740 364 740 362Z" fill="#0075ff" stroke="#0075ff" stroke-width="0.9" fill-rule="evenodd"/>
<path d="M698 506 690 510 690 530 698 536 708 536 714 532 716 530 720 524 720 518 718 514 714 508 708 506ZM690 410 698 414 708 414 720 408 728 402 734 392 736 384 736 374 738 372 754 374 754 374 762 374 762 372 738 370 736 368 734 362 730 354 690 354Z" fill="#00c9ff" stroke="#00c9ff" stroke-width="0.9" fill-rule="evenodd"/>
<path d="M696 514 694 518 694 524 694 526 698 528 706 528 708 528 712 524 712 518 710 516 706 512 698 512ZM690 354 690 406 698 408 708 408 708 408 712 408 720 402 726 398 730 388 732 382 732 372 730 364 724 354Z" fill="#00f3e2" stroke="#00f3e2" stroke-width="0.9" fill-rule="evenodd"/>
<path d="M702 518 700 520 702 522 704 520ZM690 354 690 400 698 404 708 404 716 400 724 390 728 382 728 370 724 362 718 354Z" fill="#00c197" stroke="#00c197" stroke-width="0.9" fill-rule="evenodd"/>
<path d="M698 354 692 358 690 360 690 394 692 396 698 398 706 398 714 396 720 390 722 384 724 374 722 374 722 370 720 364 714 358 706 354Z" fill="#0a8643" stroke="#0a8643" stroke-width="0.9" fill-rule="evenodd"/>
<path d="M698 360 692 362 690 366 690 386 690 388 696 392 698 394 706 394 712 390 716 386 718 380 718 372 714 364 710 360 706 360Z" fill="#2c8010" stroke="#2c8010" stroke-width="0.9" fill-rule="evenodd"/>
<path d="M698 364 696 366 692 372 692 382 692 384 698 388 706 388 708 388 714 382 714 372 712 370 706 364Z" fill="#8eb800" stroke="#8eb800" stroke-width="0.9" fill-rule="evenodd"/>
<path d="M700 370 696 374 696 378 700 384 706 384 710 378 710 374 706 370Z" fill="#e8f100" stroke="#e8f100" stroke-width="0.9" fill-rule="evenodd"/>
<path d="M700 374 700 378 704 378 704 374Z" fill="#fff900" stroke="#fff900" stroke-width="0.9" fill-rule="evenodd"/>
</g>
<path d="M713.6 369.5 L713.8 382.1 L713.9 394.7 L714.1 407.3 L714.3 419.9 L714.5 432.5 L714.6 445.1 L714.8 457.7 L715.0 470.3 L715.2 482.9 L715.3 495.5 L715.5 508.1 L715.7 520.7M731.8 371.1 L732.0 384.1 L732.2 397.1 L732.3 410.1 L732.5 423.1 L732.7 436.1 L732.9 449.1 L733.0 462.1 L733.2 475.1 L733.4 488.0 L733.6 501.0 L733.8 514.0 L733.9 527.0M751.5 372.9 L751.7 386.3 L751.9 399.7 L752.1 413.1 L752.2 426.5 L752.4 439.9 L752.6 453.4 L752.8 466.8 L753.0 480.2 L753.2 493.6 L753.4 507.0 L753.5 520.4 L753.7 533.8M772.5 374.8 L772.7 388.6 L772.9 402.5 L773.1 416.3 L773.3 430.2 L773.5 444.1 L773.7 457.9 L773.8 471.8 L774.0 485.6 L774.2 499.5 L774.4 513.4 L774.6 527.2 L774.8 541.1M793.5 376.6 L793.7 390.9 L793.9 405.2 L794.1 419.6 L794.3 433.9 L794.5 448.2 L794.7 462.5 L794.9 476.8 L795.1 491.1 L795.3 505.4 L795.5 519.7 L795.7 534.0 L795.9 548.3M817.3 378.8 L817.5 393.6 L817.7 408.4 L817.9 423.2 L818.1 438.0 L818.3 452.8 L818.5 467.7 L818.8 482.5 L819.0 497.3 L819.2 512.1 L819.4 526.9 L819.6 541.7 L819.8 556.6M839.8 380.8 L840.0 396.1 L840.2 411.4 L840.4 426.7 L840.7 442.0 L840.9 457.3 L841.1 472.6 L841.3 487.9 L841.5 503.2 L841.7 518.4 L842.0 533.7 L842.2 549.0 L842.4 564.3M863.6 382.9 L863.8 398.7 L864.0 414.5 L864.3 430.3 L864.5 446.1 L864.7 461.9 L864.9 477.7 L865.2 493.5 L865.4 509.3 L865.6 525.1 L865.8 541.0 L866.1 556.8 L866.3 572.6M888.8 385.2 L889.0 401.5 L889.3 417.8 L889.5 434.2 L889.7 450.5 L890.0 466.9 L890.2 483.2 L890.4 499.6 L890.7 515.9 L890.9 532.2 L891.1 548.6 L891.3 564.9 L891.6 581.3M915.4 387.5 L915.6 404.4 L915.9 421.4 L916.1 438.3 L916.4 455.2 L916.6 472.1 L916.8 489.0 L917.1 505.9 L917.3 522.8 L917.6 539.7 L917.8 556.6 L918.0 573.6 L918.3 590.5M697.2 386.4 L717.8 388.9 L738.3 391.4 L758.8 393.8 L779.3 396.3 L799.8 398.8 L820.3 401.3 L840.8 403.8 L861.3 406.3 L881.8 408.8 L902.4 411.3 L922.9 413.8 L943.4 416.2M697.5 404.8 L718.0 407.9 L738.5 411.0 L759.1 414.2 L779.6 417.3 L800.1 420.5 L820.6 423.6 L841.1 426.8 L861.7 429.9 L882.2 433.1 L902.7 436.2 L923.2 439.4 L943.8 442.5M697.8 423.1 L718.3 426.9 L738.8 430.7 L759.3 434.5 L779.9 438.3 L800.4 442.1 L820.9 445.9 L841.5 449.7 L862.0 453.5 L882.5 457.3 L903.1 461.1 L923.6 464.9 L944.1 468.8M698.0 441.5 L718.5 446.0 L739.1 450.4 L759.6 454.9 L780.2 459.3 L800.7 463.8 L821.2 468.2 L841.8 472.7 L862.3 477.2 L882.9 481.6 L903.4 486.1 L924.0 490.5 L944.5 495.0M698.2 459.9 L718.8 465.0 L739.4 470.1 L759.9 475.2 L780.5 480.3 L801.0 485.4 L821.6 490.6 L842.1 495.7 L862.7 500.8 L883.2 505.9 L903.8 511.0 L924.3 516.1 L944.9 521.2M698.5 478.2 L719.1 484.0 L739.6 489.8 L760.2 495.6 L780.8 501.3 L801.3 507.1 L821.9 512.9 L842.4 518.6 L863.0 524.4 L883.6 530.2 L904.1 536.0 L924.7 541.7 L945.2 547.5M698.8 496.6 L719.3 503.1 L739.9 509.5 L760.5 515.9 L781.0 522.3 L801.6 528.8 L822.2 535.2 L842.8 541.6 L863.3 548.0 L883.9 554.5 L904.5 560.9 L925.1 567.3 L945.6 573.8M974.0 394.5 L974.1 442.9 L974.2 491.2 L974.4 539.6 L974.5 588.0M943.4 416.2 L958.7 417.5 L974.1 418.7 L989.4 419.9 L1004.8 421.1M943.8 442.5 L958.9 442.7 L974.1 442.9 L989.3 443.1 L1004.5 443.2M944.1 468.8 L959.2 467.9 L974.2 467.1 L989.2 466.2 L1004.2 465.4M944.5 495.0 L959.4 493.1 L974.2 491.2 L989.1 489.4 L1004.0 487.5M944.9 521.2 L959.6 518.3 L974.3 515.4 L989.0 512.5 L1003.8 509.6M945.2 547.5 L959.8 543.6 L974.4 539.6 L988.9 535.7 L1003.5 531.8M945.6 573.8 L960.0 568.8 L974.4 563.8 L988.8 558.8 L1003.2 553.9" stroke="#000" stroke-opacity="0.8" stroke-width="1" fill="none"/>
<path d="M943 390 Q940 500 946 600 M697 368 Q695 445 697 505 Q699 517 712 522 L742 534" stroke="#000" stroke-width="1" fill="none"/>
</svg><!-- viewport toolbar -->
<svg class="a" style="left:915px;top:122px" width="240" height="26" viewBox="915 122 240 26">
 <g fill="none" stroke="#bbb" stroke-width="1">
  <path d="M925 130.8 L936 130.8 M925 129 L925 132.6 M936 129 L936 132.6"/>
  <rect x="924.5" y="135.2" width="12" height="5" rx="0.8"/><path d="M927.5 135.2 V136.8 M930.5 135.2 V137.3 M933.5 135.2 V136.8"/>
  <path d="M1002 126 L1002 140 L1016 140 M999 129 L1013 129 L1013 143"/>
 </g>
 <g fill="none" stroke="#333" stroke-width="1.1">
  <path d="M945 128 L948 131 M945 128 L948 128 M945 128 L945 131 M956 128 L953 131 M956 128 L953 128 M956 128 L956 131 M945 141 L948 138 M945 141 L948 141 M945 141 L945 138 M956 141 L953 138 M956 141 L953 141 M956 141 L956 138"/>
  <path d="M967.5 130 Q961 136 964 139.5 Q966 141 968.5 140 M965 130.5 L967.5 130 L967.8 132.5 M971.5 128.5 Q976 128 975 133 Q974 136 971 138.5 M970.8 135.5 L971 138.5 L974 138.3"/>
  <path d="M981 132 L984 135 L987 132 M1016 132 L1019 135 L1022 132"/>
  <path d="M1029 131 L1032 127.5 L1041.5 127.5 L1041.5 137 L1038 140.5 L1029 140.5 Z M1029 131 L1038 131 L1041.5 127.5 M1038 131 L1038 140.5 M1032 127.5 L1032 137 L1029 140.5 M1032 137 L1041.5 137"/>
  <path d="M1048.5 131 L1052 127.5 L1061 127.5 L1061 137 L1057.5 140.5 L1048.5 140.5 Z M1048.5 131 L1057.5 131 L1061 127.5 M1057.5 131 L1057.5 140.5"/>
  <path d="M1092 131 L1098 128 L1103 129 L1103 134 L1096 139 L1091 137 Z M1092 131 L1096 133 L1103 129 M1096 133 L1096 139"/>
  <path d="M1131 134 L1136.5 128.5 L1142 134 M1133 132.5 L1133 141 L1140 141 L1140 132.5 M1135 141 L1135 136 L1138 136 L1138 141"/>
 </g>
 <path d="M1068 131 L1071.5 127.5 L1081 127.5 L1081 137 L1077.5 140.5 L1068 140.5 Z" fill="#111"/>
 <path d="M1052 131 L1052 137 L1048.5 140.5 M1052 137 L1061 137" stroke="#333" fill="none" stroke-width="0.8"/>
 <path d="M1116.5 126 L1116.5 143 M1111 135 Q1116 131 1122 135 Q1117 139 1111 135" stroke="#c4c4c4" fill="none" stroke-width="1"/>
 <rect x="993" y="126" width="1" height="17" fill="#ddd"/>
 <rect x="1085" y="126" width="1" height="17" fill="#ddd"/>
</svg>
<div class="a" style="left:1088px;top:125px;width:17px;height:18px;background:rgba(0,0,0,0.07)"></div>
<!-- production cost -->
<div class="a" style="left:953px;top:157px;font-size:9px;font-weight:bold;color:#f26f21;line-height:11px">Production cost <span style="color:#222">&nbsp;-&nbsp; 597 €</span></div>
<!-- view cube -->
<svg class="a" style="left:1070px;top:160px" width="80" height="60" viewBox="1070 160 80 60">
 <ellipse cx="1112.8" cy="202.5" rx="27" ry="7.5" fill="none" stroke="#dcdcdc" stroke-width="5"/>
 <path d="M1093.3 175.7 L1114.3 173 L1131.1 174.5 L1130.7 201.3 L1108.6 208.5 L1095.6 199.7 Z" fill="#b9b9b9"/>
 <path d="M1093.3 175.7 L1114.3 173 L1131.1 174.5 L1130.7 201.3 L1108.6 208.5 L1095.6 199.7 Z M1093.3 175.7 L1107.4 178 L1131.1 174.5 M1107.4 178 L1108.6 208.5 M1114.3 173 L1115 195 L1095.6 199.7 M1115 195 L1130.7 201.3" fill="none" stroke="#858585" stroke-width="0.8"/>
 <path d="M1083 206 L1090 204 M1131 193 L1136 191 M1127 208 L1140 207 M1133 204 L1132 211" stroke="#777" stroke-width="0.8"/>
</svg>

<div class="a" style="left:1099px;top:230px;font-size:11.8px;color:#222">[MPa]</div>
<svg class="a" style="left:0;top:0" width="1463" height="785" viewBox="0 0 1463 785">
<rect x="1110.5" y="266.50" width="20.5" height="11.88" fill="#b00000"/>
<rect x="1110.5" y="278.07" width="20.5" height="11.88" fill="#dc0000"/>
<rect x="1110.5" y="289.65" width="20.5" height="11.88" fill="#ff0000"/>
<rect x="1110.5" y="301.23" width="20.5" height="11.88" fill="#ff4500"/>
<rect x="1110.5" y="312.80" width="20.5" height="11.88" fill="#ff7800"/>
<rect x="1110.5" y="324.38" width="20.5" height="11.88" fill="#ffa800"/>
<rect x="1110.5" y="335.95" width="20.5" height="11.88" fill="#ffc800"/>
<rect x="1110.5" y="347.52" width="20.5" height="11.88" fill="#ffee00"/>
<rect x="1110.5" y="359.10" width="20.5" height="11.88" fill="#dde600"/>
<rect x="1110.5" y="370.68" width="20.5" height="11.88" fill="#88b000"/>
<rect x="1110.5" y="382.25" width="20.5" height="11.88" fill="#2a7a10"/>
<rect x="1110.5" y="393.82" width="20.5" height="11.88" fill="#0a8040"/>
<rect x="1110.5" y="405.40" width="20.5" height="11.88" fill="#00b890"/>
<rect x="1110.5" y="416.98" width="20.5" height="11.88" fill="#00e8d8"/>
<rect x="1110.5" y="428.55" width="20.5" height="11.88" fill="#00c0ff"/>
<rect x="1110.5" y="440.12" width="20.5" height="11.88" fill="#0070ff"/>
<rect x="1110.5" y="451.70" width="20.5" height="11.88" fill="#0000ff"/>
<rect x="1110.5" y="463.27" width="20.5" height="11.88" fill="#1c00d8"/>
<rect x="1110.5" y="474.85" width="20.5" height="11.88" fill="#2e00a8"/>
<rect x="1110.5" y="486.42" width="20.5" height="11.88" fill="#48007e"/>
<rect x="1110.5" y="266.5" width="20.5" height="231.5" fill="none" stroke="#222" stroke-width="0.8"/>
<rect x="1104.5" y="266.0" width="6" height="1" fill="#444"/>
<rect x="1104.5" y="285.5" width="6" height="1" fill="#444"/>
<rect x="1104.5" y="302.1" width="6" height="1" fill="#444"/>
<rect x="1104.5" y="318.5" width="6" height="1" fill="#444"/>
<rect x="1104.5" y="335.0" width="6" height="1" fill="#444"/>
<rect x="1104.5" y="351.1" width="6" height="1" fill="#444"/>
<rect x="1104.5" y="367.5" width="6" height="1" fill="#444"/>
<rect x="1104.5" y="383.7" width="6" height="1" fill="#444"/>
<rect x="1104.5" y="400.0" width="6" height="1" fill="#444"/>
<rect x="1104.5" y="416.5" width="6" height="1" fill="#444"/>
<rect x="1104.5" y="432.9" width="6" height="1" fill="#444"/>
<rect x="1104.5" y="448.9" width="6" height="1" fill="#444"/>
<rect x="1104.5" y="465.5" width="6" height="1" fill="#444"/>
<rect x="1104.5" y="481.5" width="6" height="1" fill="#444"/>
<rect x="1104.5" y="497.5" width="6" height="1" fill="#444"/>
</svg>
<div class="a leg" style="left:1059px;top:257.0px">355.0</div>
<div class="a leg" style="left:1059px;top:276.5px">325</div>
<div class="a leg" style="left:1059px;top:293.0px">300</div>
<div class="a leg" style="left:1059px;top:309.5px">275</div>
<div class="a leg" style="left:1059px;top:326.0px">250</div>
<div class="a leg" style="left:1059px;top:342.0px">225</div>
<div class="a leg" style="left:1059px;top:358.5px">200</div>
<div class="a leg" style="left:1059px;top:374.7px">175</div>
<div class="a leg" style="left:1059px;top:391.0px">150</div>
<div class="a leg" style="left:1059px;top:407.5px">125</div>
<div class="a leg" style="left:1059px;top:424.0px">100</div>
<div class="a leg" style="left:1059px;top:440.0px">75</div>
<div class="a leg" style="left:1059px;top:456.5px">50</div>
<div class="a leg" style="left:1059px;top:472.5px">25</div>
<div class="a leg" style="left:1059px;top:499.3px">0.0</div><div class="a res" style="left:7px;top:158.5px">Analysis</div>
<div class="a res" style="left:103.6px;top:158.5px">100.0%</div>
<svg class="a" style="left:83px;top:157.5px" width="14" height="12"><path d="M1.5 6.5 L5 10.5 L12.5 1.5" stroke="#5cb85c" stroke-width="2.3" fill="none"/></svg>
<div class="a res" style="left:7px;top:174.5px">Plates</div>
<div class="a res" style="left:103.6px;top:174.5px">0.01 &lt; 5.00%</div>
<svg class="a" style="left:83px;top:173.5px" width="14" height="12"><path d="M1.5 6.5 L5 10.5 L12.5 1.5" stroke="#5cb85c" stroke-width="2.3" fill="none"/></svg>
<div class="a res" style="left:7px;top:190.5px">Loc. deformation</div>
<div class="a res" style="left:108.5px;top:190.5px">0.0 &lt; 3%</div>
<svg class="a" style="left:83px;top:189.5px" width="14" height="12"><path d="M1.5 6.5 L5 10.5 L12.5 1.5" stroke="#5cb85c" stroke-width="2.3" fill="none"/></svg>
<div class="a res" style="left:7px;top:206.5px">Bolts</div>
<div class="a res" style="left:106px;top:206.5px">28.2 &lt; 100%</div>
<svg class="a" style="left:83px;top:205.5px" width="14" height="12"><path d="M1.5 6.5 L5 10.5 L12.5 1.5" stroke="#5cb85c" stroke-width="2.3" fill="none"/></svg>
<div class="a res" style="left:7px;top:222.5px">Anchors</div>
<div class="a res" style="left:103px;top:222.5px">4969.7 &gt; 100%</div>
<svg class="a" style="left:83px;top:221.5px" width="14" height="12"><path d="M2 1 L12 11 M12 1 L2 11" stroke="#f28a8a" stroke-width="2.6" fill="none"/></svg>
<div class="a res" style="left:7px;top:238.5px">Welds</div>
<div class="a res" style="left:106px;top:238.5px">31.3 &lt; 100%</div>
<svg class="a" style="left:83px;top:237.5px" width="14" height="12"><path d="M1.5 6.5 L5 10.5 L12.5 1.5" stroke="#5cb85c" stroke-width="2.3" fill="none"/></svg>
<div class="a res" style="left:7px;top:254.5px">Concrete block</div>
<div class="a res" style="left:106px;top:254.5px">39.7 &lt; 100%</div>
<svg class="a" style="left:83px;top:253.5px" width="14" height="12"><path d="M1.5 6.5 L5 10.5 L12.5 1.5" stroke="#5cb85c" stroke-width="2.3" fill="none"/></svg>
<div class="a res" style="left:7px;top:270.5px">Shear</div>
<div class="a res" style="left:106px;top:270.5px">17.3 &lt; 100%</div>
<svg class="a" style="left:83px;top:269.5px" width="14" height="12"><path d="M1.5 6.5 L5 10.5 L12.5 1.5" stroke="#5cb85c" stroke-width="2.3" fill="none"/></svg>
<div class="a res" style="left:7px;top:286.5px">Buckling</div>
<div class="a res" style="left:103.6px;top:286.5px">Not calculated</div><!-- splitter / right panel -->
<div class="a" style="left:1154px;top:122px;width:4.6px;height:641px;background:#cacaca"></div>
<div class="a" style="left:1158.6px;top:122px;width:305px;height:21.4px;background:#f26f21"></div>
<div class="a" style="left:1184.6px;top:125px;width:52px;height:18.4px;background:#f0f0f0"></div>
<svg class="a" style="left:1168px;top:129px" width="8" height="8"><path d="M6 0 L6 7 L1.5 3.5 Z" fill="#fbd9c4"/></svg>
<svg class="a" style="left:1453px;top:128px" width="8" height="9"><path d="M1 0 L1 8 L6 4 Z" fill="#fff"/></svg>
<div class="a" style="left:1195px;top:129px;font-size:9px;color:#f26f21;line-height:11px">Analysis</div>
<div class="a" style="left:1247px;top:129px;font-size:9px;color:#fff;line-height:11px">Local deformation</div>
<div class="a" style="left:1341px;top:129px;font-size:9px;color:#fff;line-height:11px">Plates</div>
<div class="a" style="left:1385px;top:129px;font-size:9px;color:#fff;line-height:11px">Bolts</div>
<div class="a" style="left:1424px;top:129px;font-size:9px;color:#fff;line-height:11px">Anch</div>
<div class="a" style="left:1170px;top:155px;font-size:9.5px;font-weight:bold;color:#f26f21;line-height:12px">Status of FE analysis</div>
<div class="a" style="left:1167px;top:170px;width:150px;height:49px;border:1px solid #aaa;background:#f0f0f0"></div>
<div class="a" style="left:1168px;top:195px;width:148px;height:23px;background:#e4e4e4;border-top:1px solid #c8c8c8"></div>
<div class="a" style="left:1189px;top:171px;width:1px;height:47px;background:#c8c8c8"></div>
<div class="a" style="left:1225px;top:171px;width:1px;height:47px;background:#c8c8c8"></div>
<div class="a" style="left:1258px;top:171px;width:1px;height:47px;background:#c8c8c8"></div>
<div class="a" style="left:1192px;top:178px;font-size:9px;font-weight:bold;color:#333;line-height:11px">Status</div>
<div class="a" style="left:1229px;top:178px;font-size:9px;font-weight:bold;color:#333;line-height:11px">Loads</div>
<div class="a" style="left:1261px;top:178px;font-size:9px;font-weight:bold;color:#333;line-height:11px">Applied [%]</div>
<svg class="a" style="left:1175px;top:202px" width="6" height="9"><path d="M1 1 L4.5 4.5 L1 8" stroke="#333" fill="none" stroke-width="1.1"/></svg>
<svg class="a" style="left:1201px;top:200px" width="13" height="13"><circle cx="6.5" cy="6.5" r="6" fill="#46c23a"/><path d="M3.5 6.8 L5.7 9 L9.8 4.5" stroke="#fff" fill="none" stroke-width="1.6"/></svg>
<div class="a" style="left:1229px;top:202px;font-size:9px;color:#222;line-height:11px">LE1</div>
<div class="a" style="left:1262px;top:202px;font-size:9px;color:#222;line-height:11px">100.00</div>
<div class="a" style="left:1158.6px;top:532.7px;width:305px;height:4px;background:#cacaca"></div>
<div class="a" style="left:1161px;top:539.4px;width:17.7px;height:18.3px;background:linear-gradient(#ececec,#dcdcdc);border:1px solid #c4c4c4"></div>
<svg class="a" style="left:1161px;top:539px" width="18" height="18"><path d="M5 5 L7 7 M13 5 L11 7 M5 13 L7 11 M13 13 L11 11 M5 5 h2 M5 5 v2 M13 5 h-2 M13 5 v2 M5 13 h2 M5 13 v-2 M13 13 h-2 M13 13 v-2" stroke="#555" stroke-width="0.8" fill="none"/></svg>
<!-- status bar -->
<div class="a" id="status"></div>
<div class="a sg" style="left:18px">Design code:</div>
<div class="a sw" style="left:76px">EN</div>
<div class="a sg" style="left:103px">Analysis:</div>
<div class="a sw" style="left:141px">Stress, strain</div>
<div class="a sg" style="left:212px">Load effects:</div>
<div class="a sw" style="left:271px">In equilibrium</div>
<div class="a sg" style="left:344px">Units:</div>
<div class="a sw" style="left:375px">mm</div>
<div class="a" style="left:1372px;top:772px;font-size:9px;color:#f26f21">www.<span style="color:#fff">ideastatica</span>.com</div>
<!-- red highlights -->
<div class="a" style="left:676px;top:45.7px;width:333px;height:79.7px;border:6.3px solid #f80000;border-radius:18px"></div>
<div class="a" style="left:0px;top:143.8px;width:178px;height:176.7px;border:6px solid #f80000;border-radius:31px"></div>
</body></html>
